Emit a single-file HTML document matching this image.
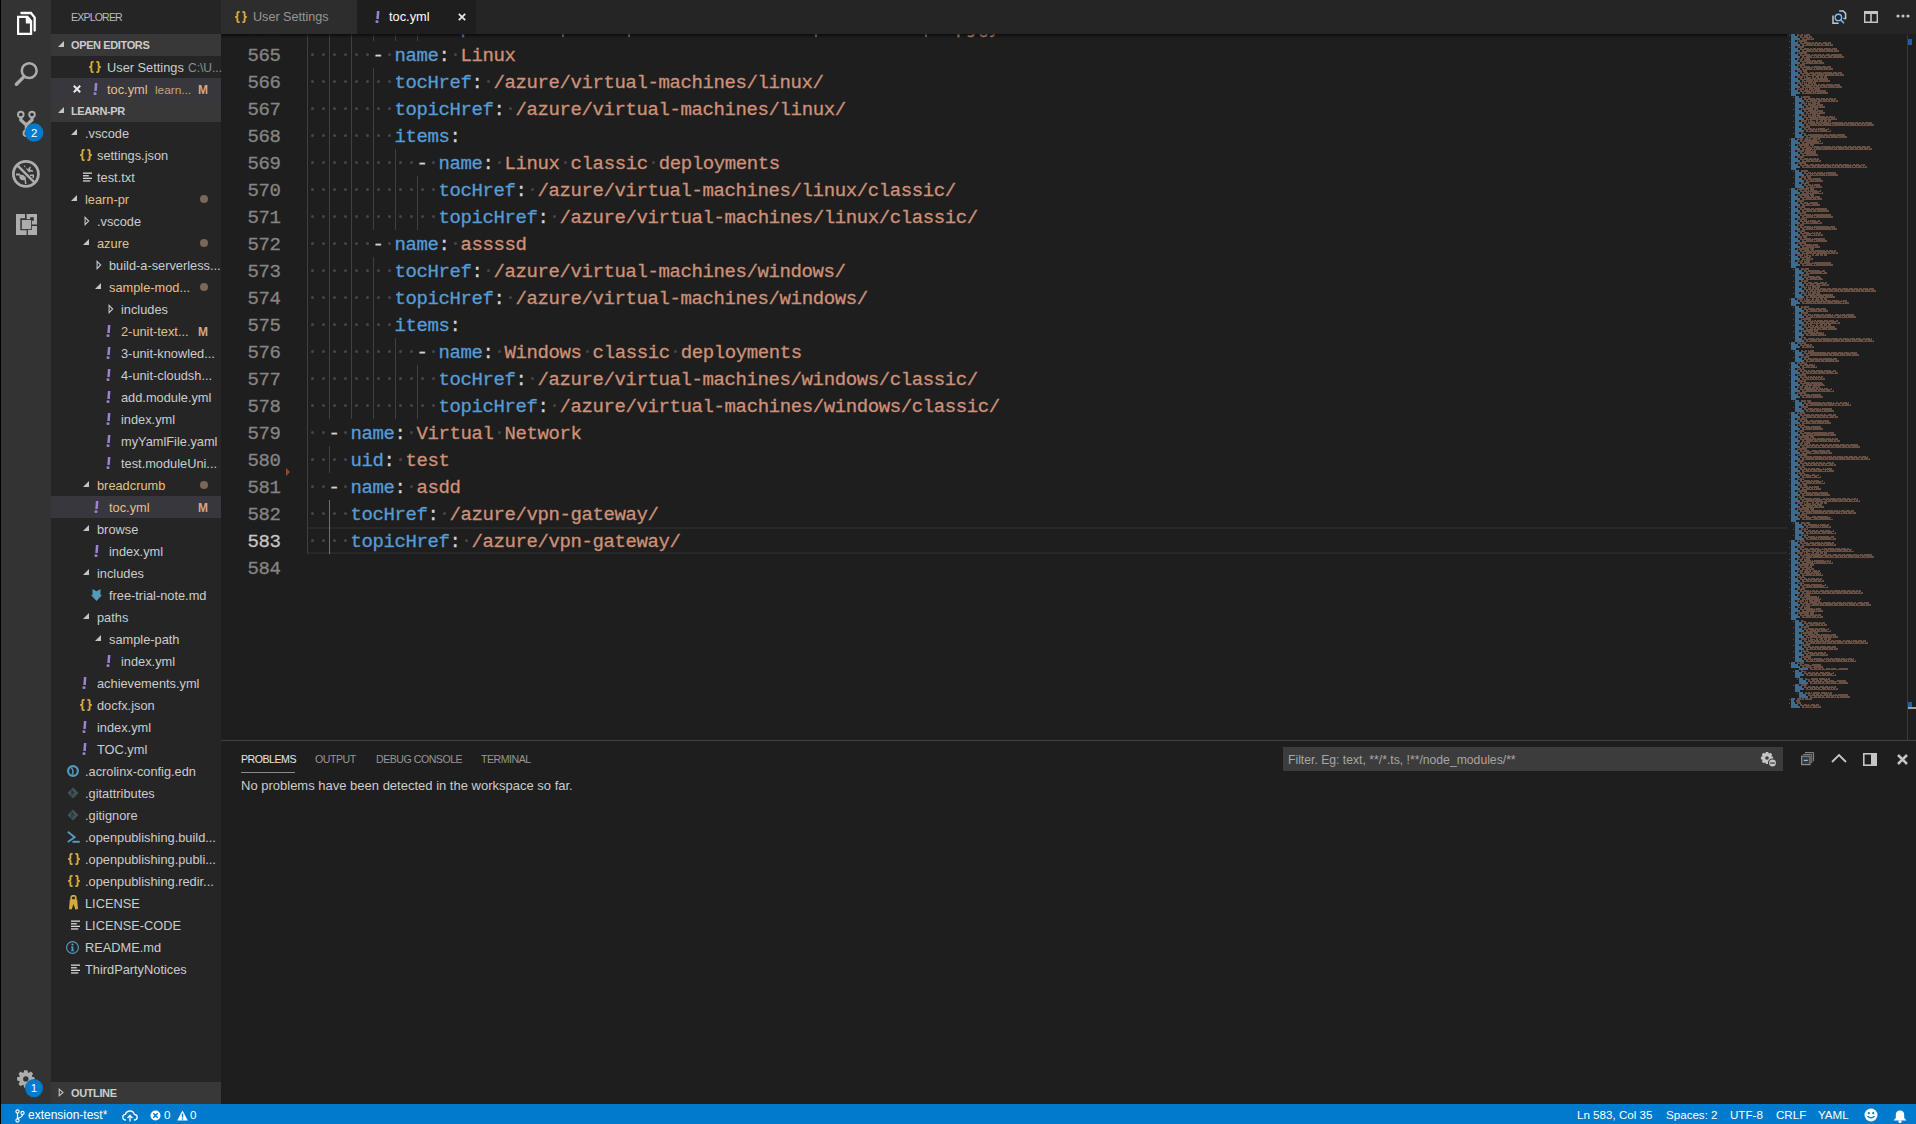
<!DOCTYPE html><html><head><meta charset="utf-8"><style>
*{box-sizing:border-box}
html,body{margin:0;padding:0}
body{width:1916px;height:1124px;overflow:hidden;position:relative;background:#1e1e1e;font-family:"Liberation Sans",sans-serif;}
.a{position:absolute}
.ic{position:absolute;display:block}
.t{position:absolute;white-space:nowrap;font-size:12.8px;line-height:22px;color:#cccccc}
.code{position:absolute;white-space:pre;font-family:"Liberation Mono",monospace;font-size:19px;letter-spacing:-0.4px;line-height:27px;-webkit-text-stroke:0.3px currentColor}
.k{color:#569cd6} .v{color:#ce9178} .p{color:#d4d4d4}
.cap{position:absolute;white-space:nowrap;font-size:11px;line-height:22px}
</style></head><body>
<div class="a" style="left:0;top:0;width:1px;height:1124px;background:#000;z-index:5"></div><div class="a" style="left:1px;top:0;width:50px;height:1104px;background:#333333"></div><div class="a" style="left:51px;top:0;width:170px;height:1104px;background:#252526"></div><div class="cap" style="left:71px;top:6px;color:#bbbbbb;font-size:10.6px;letter-spacing:-0.85px">EXPLORER</div><div class="a" style="left:51px;top:34px;width:170px;height:22px;background:#383838"></div><svg class="ic" style="left:58px;top:41px" width="6" height="6" viewBox="0 0 6 6"><path d="M6 0 L6 6 L0 6 Z" fill="#c5c5c5"/></svg><div class="cap" style="left:71px;top:34px;font-weight:bold;color:#cccccc;font-size:11px;letter-spacing:-0.38px">OPEN EDITORS</div><svg class="ic" style="left:89.0px;top:61.0px" width="12" height="12" viewBox="0 0 12 12"><path d="M4.6 0.9 L3.4 0.9 Q2.4 0.9 2.4 1.9 L2.4 5 L1 6 L2.4 7 L2.4 10.1 Q2.4 11.1 3.4 11.1 L4.6 11.1" fill="none" stroke="#dcaf3c" stroke-width="1.8"/><path d="M7.4 0.9 L8.6 0.9 Q9.6 0.9 9.6 1.9 L9.6 5 L11 6 L9.6 7 L9.6 10.1 Q9.6 11.1 8.6 11.1 L7.4 11.1" fill="none" stroke="#dcaf3c" stroke-width="1.8"/></svg><div class="t" style="left:107px;top:57px">User Settings</div><div class="t" style="left:188px;top:57px;color:#8f8f8f;font-size:12px">C:\U...</div><div class="a" style="left:51px;top:78px;width:170px;height:22px;background:#37373d"></div><svg class="ic" style="left:73px;top:85px" width="8" height="8" viewBox="0 0 8 8"><path d="M0.8 0.8 L7.2 7.2 M7.2 0.8 L0.8 7.2" stroke="#e8e8e8" stroke-width="2"/></svg><svg class="ic" style="left:92.5px;top:83.0px" width="5" height="12" viewBox="0 0 5 12"><path d="M1.9 0 L4.4 0 L3.8 7.9 L1.3 7.9 Z" fill="#9c82d0"/><rect x="0.5" y="9.2" width="3" height="2.8" rx="1.1" fill="#9a80cc"/></svg><div class="t" style="left:107px;top:79px;color:#e2c08d">toc.yml</div><div class="t" style="left:155px;top:79px;color:#e2c08d;opacity:.8;font-size:11.8px">learn...</div><div class="t" style="left:198px;top:79px;color:#cfa98a;font-weight:bold;font-size:12px">M</div><div class="a" style="left:51px;top:100px;width:170px;height:22px;background:#383838"></div><svg class="ic" style="left:58px;top:107px" width="6" height="6" viewBox="0 0 6 6"><path d="M6 0 L6 6 L0 6 Z" fill="#c5c5c5"/></svg><div class="cap" style="left:71px;top:100px;font-weight:bold;color:#cccccc;font-size:11px;letter-spacing:-0.38px">LEARN-PR</div><svg class="ic" style="left:71px;top:129px" width="6" height="6" viewBox="0 0 6 6"><path d="M6 0 L6 6 L0 6 Z" fill="#c5c5c5"/></svg><div class="t" style="left:85px;top:123px;color:#cccccc">.vscode</div><svg class="ic" style="left:79.5px;top:149.0px" width="12" height="12" viewBox="0 0 12 12"><path d="M4.6 0.9 L3.4 0.9 Q2.4 0.9 2.4 1.9 L2.4 5 L1 6 L2.4 7 L2.4 10.1 Q2.4 11.1 3.4 11.1 L4.6 11.1" fill="none" stroke="#dcaf3c" stroke-width="1.8"/><path d="M7.4 0.9 L8.6 0.9 Q9.6 0.9 9.6 1.9 L9.6 5 L11 6 L9.6 7 L9.6 10.1 Q9.6 11.1 8.6 11.1 L7.4 11.1" fill="none" stroke="#dcaf3c" stroke-width="1.8"/></svg><div class="t" style="left:97px;top:145px;color:#cccccc">settings.json</div><svg class="ic" style="left:82.5px;top:171.7px" width="9.4" height="10" viewBox="0 0 9.4 10"><rect x="0" y="0.5" width="9.4" height="1.3" fill="#d4d7d6"/><rect x="0" y="3.1" width="5.8" height="1.3" fill="#d4d7d6"/><rect x="0" y="5.7" width="9.4" height="1.3" fill="#d4d7d6"/><rect x="0" y="8.3" width="7.3" height="1.3" fill="#d4d7d6"/></svg><div class="t" style="left:97px;top:167px;color:#cccccc">test.txt</div><svg class="ic" style="left:71px;top:195px" width="6" height="6" viewBox="0 0 6 6"><path d="M6 0 L6 6 L0 6 Z" fill="#c5c5c5"/></svg><div class="t" style="left:85px;top:189px;color:#e2c08d">learn-pr</div><div class="a" style="left:200px;top:195px;width:8px;height:8px;border-radius:50%;background:#7b665a"></div><svg class="ic" style="left:84px;top:216px" width="6" height="10" viewBox="0 0 6 10"><path d="M1.1 1.3 L4.7 5 L1.1 8.7 Z" fill="none" stroke="#c5c5c5" stroke-width="1.1"/></svg><div class="t" style="left:97px;top:211px;color:#cccccc">.vscode</div><svg class="ic" style="left:83px;top:239px" width="6" height="6" viewBox="0 0 6 6"><path d="M6 0 L6 6 L0 6 Z" fill="#c5c5c5"/></svg><div class="t" style="left:97px;top:233px;color:#e2c08d">azure</div><div class="a" style="left:200px;top:239px;width:8px;height:8px;border-radius:50%;background:#7b665a"></div><svg class="ic" style="left:96px;top:260px" width="6" height="10" viewBox="0 0 6 10"><path d="M1.1 1.3 L4.7 5 L1.1 8.7 Z" fill="none" stroke="#c5c5c5" stroke-width="1.1"/></svg><div class="t" style="left:109px;top:255px;color:#cccccc">build-a-serverless...</div><svg class="ic" style="left:95px;top:283px" width="6" height="6" viewBox="0 0 6 6"><path d="M6 0 L6 6 L0 6 Z" fill="#c5c5c5"/></svg><div class="t" style="left:109px;top:277px;color:#e2c08d">sample-mod...</div><div class="a" style="left:200px;top:283px;width:8px;height:8px;border-radius:50%;background:#7b665a"></div><svg class="ic" style="left:108px;top:304px" width="6" height="10" viewBox="0 0 6 10"><path d="M1.1 1.3 L4.7 5 L1.1 8.7 Z" fill="none" stroke="#c5c5c5" stroke-width="1.1"/></svg><div class="t" style="left:121px;top:299px;color:#cccccc">includes</div><svg class="ic" style="left:106.3px;top:325.0px" width="5" height="12" viewBox="0 0 5 12"><path d="M1.9 0 L4.4 0 L3.8 7.9 L1.3 7.9 Z" fill="#9c82d0"/><rect x="0.5" y="9.2" width="3" height="2.8" rx="1.1" fill="#9a80cc"/></svg><div class="t" style="left:121px;top:321px;color:#e2c08d">2-unit-text...</div><div class="t" style="left:198px;top:321px;color:#cfa98a;font-weight:bold;font-size:12px">M</div><svg class="ic" style="left:106.3px;top:347.0px" width="5" height="12" viewBox="0 0 5 12"><path d="M1.9 0 L4.4 0 L3.8 7.9 L1.3 7.9 Z" fill="#9c82d0"/><rect x="0.5" y="9.2" width="3" height="2.8" rx="1.1" fill="#9a80cc"/></svg><div class="t" style="left:121px;top:343px;color:#cccccc">3-unit-knowled...</div><svg class="ic" style="left:106.3px;top:369.0px" width="5" height="12" viewBox="0 0 5 12"><path d="M1.9 0 L4.4 0 L3.8 7.9 L1.3 7.9 Z" fill="#9c82d0"/><rect x="0.5" y="9.2" width="3" height="2.8" rx="1.1" fill="#9a80cc"/></svg><div class="t" style="left:121px;top:365px;color:#cccccc">4-unit-cloudsh...</div><svg class="ic" style="left:106.3px;top:391.0px" width="5" height="12" viewBox="0 0 5 12"><path d="M1.9 0 L4.4 0 L3.8 7.9 L1.3 7.9 Z" fill="#9c82d0"/><rect x="0.5" y="9.2" width="3" height="2.8" rx="1.1" fill="#9a80cc"/></svg><div class="t" style="left:121px;top:387px;color:#cccccc">add.module.yml</div><svg class="ic" style="left:106.3px;top:413.0px" width="5" height="12" viewBox="0 0 5 12"><path d="M1.9 0 L4.4 0 L3.8 7.9 L1.3 7.9 Z" fill="#9c82d0"/><rect x="0.5" y="9.2" width="3" height="2.8" rx="1.1" fill="#9a80cc"/></svg><div class="t" style="left:121px;top:409px;color:#cccccc">index.yml</div><svg class="ic" style="left:106.3px;top:435.0px" width="5" height="12" viewBox="0 0 5 12"><path d="M1.9 0 L4.4 0 L3.8 7.9 L1.3 7.9 Z" fill="#9c82d0"/><rect x="0.5" y="9.2" width="3" height="2.8" rx="1.1" fill="#9a80cc"/></svg><div class="t" style="left:121px;top:431px;color:#cccccc">myYamlFile.yaml</div><svg class="ic" style="left:106.3px;top:457.0px" width="5" height="12" viewBox="0 0 5 12"><path d="M1.9 0 L4.4 0 L3.8 7.9 L1.3 7.9 Z" fill="#9c82d0"/><rect x="0.5" y="9.2" width="3" height="2.8" rx="1.1" fill="#9a80cc"/></svg><div class="t" style="left:121px;top:453px;color:#cccccc">test.moduleUni...</div><svg class="ic" style="left:83px;top:481px" width="6" height="6" viewBox="0 0 6 6"><path d="M6 0 L6 6 L0 6 Z" fill="#c5c5c5"/></svg><div class="t" style="left:97px;top:475px;color:#e2c08d">breadcrumb</div><div class="a" style="left:200px;top:481px;width:8px;height:8px;border-radius:50%;background:#7b665a"></div><div class="a" style="left:51px;top:496px;width:170px;height:22px;background:#37373d"></div><svg class="ic" style="left:94.3px;top:501.0px" width="5" height="12" viewBox="0 0 5 12"><path d="M1.9 0 L4.4 0 L3.8 7.9 L1.3 7.9 Z" fill="#9c82d0"/><rect x="0.5" y="9.2" width="3" height="2.8" rx="1.1" fill="#9a80cc"/></svg><div class="t" style="left:109px;top:497px;color:#e2c08d">toc.yml</div><div class="t" style="left:198px;top:497px;color:#cfa98a;font-weight:bold;font-size:12px">M</div><svg class="ic" style="left:83px;top:525px" width="6" height="6" viewBox="0 0 6 6"><path d="M6 0 L6 6 L0 6 Z" fill="#c5c5c5"/></svg><div class="t" style="left:97px;top:519px;color:#cccccc">browse</div><svg class="ic" style="left:94.3px;top:545.0px" width="5" height="12" viewBox="0 0 5 12"><path d="M1.9 0 L4.4 0 L3.8 7.9 L1.3 7.9 Z" fill="#9c82d0"/><rect x="0.5" y="9.2" width="3" height="2.8" rx="1.1" fill="#9a80cc"/></svg><div class="t" style="left:109px;top:541px;color:#cccccc">index.yml</div><svg class="ic" style="left:83px;top:569px" width="6" height="6" viewBox="0 0 6 6"><path d="M6 0 L6 6 L0 6 Z" fill="#c5c5c5"/></svg><div class="t" style="left:97px;top:563px;color:#cccccc">includes</div><svg class="ic" style="left:91.4px;top:589.0px" width="11" height="12" viewBox="0 0 11 12"><path d="M1.5 0 L5.5 2.2 L9.5 0 L9.5 6 L11 6 L5.5 12 L0 6 L1.5 6 Z" fill="#519aba"/></svg><div class="t" style="left:109px;top:585px;color:#cccccc">free-trial-note.md</div><svg class="ic" style="left:83px;top:613px" width="6" height="6" viewBox="0 0 6 6"><path d="M6 0 L6 6 L0 6 Z" fill="#c5c5c5"/></svg><div class="t" style="left:97px;top:607px;color:#cccccc">paths</div><svg class="ic" style="left:95px;top:635px" width="6" height="6" viewBox="0 0 6 6"><path d="M6 0 L6 6 L0 6 Z" fill="#c5c5c5"/></svg><div class="t" style="left:109px;top:629px;color:#cccccc">sample-path</div><svg class="ic" style="left:106.3px;top:655.0px" width="5" height="12" viewBox="0 0 5 12"><path d="M1.9 0 L4.4 0 L3.8 7.9 L1.3 7.9 Z" fill="#9c82d0"/><rect x="0.5" y="9.2" width="3" height="2.8" rx="1.1" fill="#9a80cc"/></svg><div class="t" style="left:121px;top:651px;color:#cccccc">index.yml</div><svg class="ic" style="left:82.3px;top:677.0px" width="5" height="12" viewBox="0 0 5 12"><path d="M1.9 0 L4.4 0 L3.8 7.9 L1.3 7.9 Z" fill="#9c82d0"/><rect x="0.5" y="9.2" width="3" height="2.8" rx="1.1" fill="#9a80cc"/></svg><div class="t" style="left:97px;top:673px;color:#cccccc">achievements.yml</div><svg class="ic" style="left:79.5px;top:699.0px" width="12" height="12" viewBox="0 0 12 12"><path d="M4.6 0.9 L3.4 0.9 Q2.4 0.9 2.4 1.9 L2.4 5 L1 6 L2.4 7 L2.4 10.1 Q2.4 11.1 3.4 11.1 L4.6 11.1" fill="none" stroke="#dcaf3c" stroke-width="1.8"/><path d="M7.4 0.9 L8.6 0.9 Q9.6 0.9 9.6 1.9 L9.6 5 L11 6 L9.6 7 L9.6 10.1 Q9.6 11.1 8.6 11.1 L7.4 11.1" fill="none" stroke="#dcaf3c" stroke-width="1.8"/></svg><div class="t" style="left:97px;top:695px;color:#cccccc">docfx.json</div><svg class="ic" style="left:82.3px;top:721.0px" width="5" height="12" viewBox="0 0 5 12"><path d="M1.9 0 L4.4 0 L3.8 7.9 L1.3 7.9 Z" fill="#9c82d0"/><rect x="0.5" y="9.2" width="3" height="2.8" rx="1.1" fill="#9a80cc"/></svg><div class="t" style="left:97px;top:717px;color:#cccccc">index.yml</div><svg class="ic" style="left:82.3px;top:743.0px" width="5" height="12" viewBox="0 0 5 12"><path d="M1.9 0 L4.4 0 L3.8 7.9 L1.3 7.9 Z" fill="#9c82d0"/><rect x="0.5" y="9.2" width="3" height="2.8" rx="1.1" fill="#9a80cc"/></svg><div class="t" style="left:97px;top:739px;color:#cccccc">TOC.yml</div><svg class="ic" style="left:66.7px;top:765.0px" width="12" height="12" viewBox="0 0 12 12"><circle cx="6" cy="6" r="4.9" fill="none" stroke="#519aba" stroke-width="2.2"/><path d="M4.2 2.8 Q7.2 5.5 5.2 9.5" fill="none" stroke="#519aba" stroke-width="1.5"/></svg><div class="t" style="left:85px;top:761px;color:#cccccc">.acrolinx-config.edn</div><svg class="ic" style="left:66.5px;top:787.0px" width="12" height="12" viewBox="0 0 12 12"><path d="M6 0.5 L11.5 6 L6 11.5 L0.5 6 Z" fill="#41535b"/><path d="M5 3.2 L5 8.8 M5 4.5 L7.5 6.5" stroke="#252526" stroke-width="1"/></svg><div class="t" style="left:85px;top:783px;color:#cccccc">.gitattributes</div><svg class="ic" style="left:66.5px;top:809.0px" width="12" height="12" viewBox="0 0 12 12"><path d="M6 0.5 L11.5 6 L6 11.5 L0.5 6 Z" fill="#41535b"/><path d="M5 3.2 L5 8.8 M5 4.5 L7.5 6.5" stroke="#252526" stroke-width="1"/></svg><div class="t" style="left:85px;top:805px;color:#cccccc">.gitignore</div><svg class="ic" style="left:66.5px;top:831.0px" width="13" height="12" viewBox="0 0 13 12"><path d="M0.8 0.8 L7.6 6.2 L0.8 11" fill="none" stroke="#519aba" stroke-width="2"/><rect x="5.5" y="9.8" width="7.2" height="2" fill="#519aba"/></svg><div class="t" style="left:85px;top:827px;color:#cccccc">.openpublishing.build...</div><svg class="ic" style="left:67.5px;top:853.0px" width="12" height="12" viewBox="0 0 12 12"><path d="M4.6 0.9 L3.4 0.9 Q2.4 0.9 2.4 1.9 L2.4 5 L1 6 L2.4 7 L2.4 10.1 Q2.4 11.1 3.4 11.1 L4.6 11.1" fill="none" stroke="#dcaf3c" stroke-width="1.8"/><path d="M7.4 0.9 L8.6 0.9 Q9.6 0.9 9.6 1.9 L9.6 5 L11 6 L9.6 7 L9.6 10.1 Q9.6 11.1 8.6 11.1 L7.4 11.1" fill="none" stroke="#dcaf3c" stroke-width="1.8"/></svg><div class="t" style="left:85px;top:849px;color:#cccccc">.openpublishing.publi...</div><svg class="ic" style="left:67.5px;top:875.0px" width="12" height="12" viewBox="0 0 12 12"><path d="M4.6 0.9 L3.4 0.9 Q2.4 0.9 2.4 1.9 L2.4 5 L1 6 L2.4 7 L2.4 10.1 Q2.4 11.1 3.4 11.1 L4.6 11.1" fill="none" stroke="#dcaf3c" stroke-width="1.8"/><path d="M7.4 0.9 L8.6 0.9 Q9.6 0.9 9.6 1.9 L9.6 5 L11 6 L9.6 7 L9.6 10.1 Q9.6 11.1 8.6 11.1 L7.4 11.1" fill="none" stroke="#dcaf3c" stroke-width="1.8"/></svg><div class="t" style="left:85px;top:871px;color:#cccccc">.openpublishing.redir...</div><svg class="ic" style="left:68.7px;top:895.3px" width="9" height="15" viewBox="0 0 9 15"><circle cx="4.5" cy="3" r="2.4" fill="none" stroke="#d4aa3c" stroke-width="1.6"/><path d="M0.8 4.6 L8.2 4.6 L9 14 L6.4 14.5 L4.5 9 L2.6 14.5 L0 14 Z" fill="#d4aa3c"/></svg><div class="t" style="left:85px;top:893px;color:#cccccc">LICENSE</div><svg class="ic" style="left:70.5px;top:919.7px" width="9.4" height="10" viewBox="0 0 9.4 10"><rect x="0" y="0.5" width="9.4" height="1.3" fill="#d4d7d6"/><rect x="0" y="3.1" width="5.8" height="1.3" fill="#d4d7d6"/><rect x="0" y="5.7" width="9.4" height="1.3" fill="#d4d7d6"/><rect x="0" y="8.3" width="7.3" height="1.3" fill="#d4d7d6"/></svg><div class="t" style="left:85px;top:915px;color:#cccccc">LICENSE-CODE</div><svg class="ic" style="left:66.2px;top:940.5px" width="13" height="13" viewBox="0 0 13 13"><circle cx="6.5" cy="6.5" r="5.9" fill="none" stroke="#519aba" stroke-width="1.2"/><circle cx="6.5" cy="3.6" r="1.1" fill="#519aba"/><path d="M5 5.6 L7.4 5.6 L7.4 9.4 L8.2 9.4 L8.2 10.2 L4.8 10.2 L4.8 9.4 L5.6 9.4 L5.6 6.4 L5 6.4 Z" fill="#519aba"/></svg><div class="t" style="left:85px;top:937px;color:#cccccc">README.md</div><svg class="ic" style="left:70.5px;top:963.7px" width="9.4" height="10" viewBox="0 0 9.4 10"><rect x="0" y="0.5" width="9.4" height="1.3" fill="#d4d7d6"/><rect x="0" y="3.1" width="5.8" height="1.3" fill="#d4d7d6"/><rect x="0" y="5.7" width="9.4" height="1.3" fill="#d4d7d6"/><rect x="0" y="8.3" width="7.3" height="1.3" fill="#d4d7d6"/></svg><div class="t" style="left:85px;top:959px;color:#cccccc">ThirdPartyNotices</div><div class="a" style="left:51px;top:1082px;width:170px;height:22px;background:#383838"></div><svg class="ic" style="left:58px;top:1086px" width="6" height="14" viewBox="0 0 6 14"><path d="M1.2 3.2 L5 6.5 L1.2 9.8 Z" fill="none" stroke="#c5c5c5" stroke-width="1.1"/></svg><div class="cap" style="left:71px;top:1082px;font-weight:bold;color:#cccccc;font-size:11px;letter-spacing:-0.38px">OUTLINE</div><svg class="ic" style="left:0;top:0" width="51" height="250" viewBox="0 0 51 250"><path fill-rule="evenodd" fill="#ffffff" d="M17 15.7 L28 15.7 L32.2 20.7 L32.2 35 L17 35 Z M19.2 18.1 L25.8 18.1 L25.8 23.4 L29.9 23.4 L29.9 32.8 L19.2 32.8 Z"/><path d="M21.4 13 L31 13 L34.7 17.6 L34.7 30.5" fill="none" stroke="#ffffff" stroke-width="2.3" stroke-linecap="round" stroke-linejoin="miter"/><circle cx="29.2" cy="70.7" r="7.4" fill="none" stroke="#adadad" stroke-width="2.5"/><path d="M23.8 76.9 L16.4 84.2" stroke="#adadad" stroke-width="3.4" stroke-linecap="round"/><circle cx="20.8" cy="114.5" r="2.8" fill="none" stroke="#adadad" stroke-width="1.9"/><circle cx="32" cy="114.5" r="2.8" fill="none" stroke="#adadad" stroke-width="1.9"/><circle cx="26.3" cy="133.3" r="2.8" fill="none" stroke="#adadad" stroke-width="1.9"/><path d="M20.8 117 L20.8 120 L26.3 125 L32 120 L32 117 M26.3 124.5 L26.3 130.5" fill="none" stroke="#adadad" stroke-width="3.2" stroke-linejoin="round"/><circle cx="25.9" cy="173.9" r="12.5" fill="none" stroke="#adadad" stroke-width="2.8"/><path d="M17.6 165.6 L34.2 182.2" stroke="#adadad" stroke-width="2.5"/><path d="M23.5 165.5 L25 165.5 L25.5 168 L28 169 L30 166.5 L31 167 L30 169.5 L33 170.5 L33 172 L30.5 171.5 L29 172.5 Z" fill="#adadad"/><path d="M16 173.6 L19.5 173.6 L21 175 Q23.5 174 24.5 176.5 L25.5 176.5 L26 180 L26.5 184 L25 184 L24.5 180 Q22 181 20 179 Q19 177 19.5 175.5 L16 175.5 Z" fill="#adadad"/><path d="M30 174.5 L34 174.5 L34 178 L32.5 178 L32.5 176 L30 176 Z" fill="#adadad"/><path d="M16 214 L25 214 L25 218.3 L20.3 218.3 L20.3 230.3 L26.6 230.3 L26.6 235 L16 235 Z" fill="#adadad"/><path fill-rule="evenodd" d="M26.6 214 L37 214 L37 224.6 L26.6 224.6 Z M30.2 217.2 L33.8 217.2 L33.8 220.7 L30.2 220.7 Z" fill="#adadad"/><rect x="27.9" y="226" width="9.1" height="9" fill="#adadad"/><rect x="21" y="219.2" width="10.9" height="10.7" fill="#333333"/><rect x="21.8" y="220" width="9.3" height="9.1" fill="#adadad"/><circle cx="34.2" cy="132.4" r="9.2" fill="#007acc"/></svg><div class="a" style="left:25px;top:124px;width:18.4px;height:18.4px;color:#fff;font-size:11.5px;line-height:18.4px;text-align:center">2</div><svg class="ic" style="left:0;top:0" width="1916" height="1124" viewBox="0 0 1916 1124"><polygon points="32.04,1076.74 34.56,1077.31 34.56,1080.49 32.04,1081.06 31.74,1081.78 33.12,1083.97 30.87,1086.22 28.68,1084.84 27.96,1085.14 27.39,1087.66 24.21,1087.66 23.64,1085.14 22.92,1084.84 20.73,1086.22 18.48,1083.97 19.86,1081.78 19.56,1081.06 17.04,1080.49 17.04,1077.31 19.56,1076.74 19.86,1076.02 18.48,1073.83 20.73,1071.58 22.92,1072.96 23.64,1072.66 24.21,1070.14 27.39,1070.14 27.96,1072.66 28.68,1072.96 30.87,1071.58 33.12,1073.83 31.74,1076.02" fill="#adadad"/><circle cx="25.8" cy="1078.9" r="6.6" fill="#adadad"/><circle cx="25.8" cy="1078.9" r="2.7" fill="#333333"/></svg><svg class="ic" style="left:0;top:1070px" width="51" height="30"><circle cx="34" cy="18.1" r="9.1" fill="#007acc"/></svg><div class="a" style="left:25px;top:1079px;width:18px;height:18px;color:#fff;font-size:11.5px;line-height:18px;text-align:center">1</div><div class="a" style="left:221px;top:0;width:1695px;height:34px;background:#252526"></div><div class="a" style="left:221px;top:0;width:136px;height:34px;background:#2d2d2d"></div><div class="a" style="left:357px;top:0;width:119px;height:34px;background:#1e1e1e"></div><svg class="ic" style="left:235.0px;top:11.0px" width="12" height="12" viewBox="0 0 12 12"><path d="M4.6 0.9 L3.4 0.9 Q2.4 0.9 2.4 1.9 L2.4 5 L1 6 L2.4 7 L2.4 10.1 Q2.4 11.1 3.4 11.1 L4.6 11.1" fill="none" stroke="#dcaf3c" stroke-width="1.8"/><path d="M7.4 0.9 L8.6 0.9 Q9.6 0.9 9.6 1.9 L9.6 5 L11 6 L9.6 7 L9.6 10.1 Q9.6 11.1 8.6 11.1 L7.4 11.1" fill="none" stroke="#dcaf3c" stroke-width="1.8"/></svg><div class="t" style="left:253px;top:6px;color:#969696;font-size:12.6px">User Settings</div><svg class="ic" style="left:374.5px;top:11.0px" width="5" height="12" viewBox="0 0 5 12"><path d="M1.9 0 L4.4 0 L3.8 7.9 L1.3 7.9 Z" fill="#9c82d0"/><rect x="0.5" y="9.2" width="3" height="2.8" rx="1.1" fill="#9a80cc"/></svg><div class="t" style="left:389px;top:6px;color:#ffffff;font-size:12.8px">toc.yml</div><svg class="ic" style="left:458px;top:13px" width="8" height="8" viewBox="0 0 8 8"><path d="M0.8 0.8 L7.2 7.2 M7.2 0.8 L0.8 7.2" stroke="#e8e8e8" stroke-width="1.7"/></svg><svg class="ic" style="left:1826px;top:4px" width="26" height="26" viewBox="1826 4 26 26"><path d="M1839.2 11 L1843.2 11 L1845.6 13.4 L1845.6 18.6 L1843.4 18.6" fill="none" stroke="#c5c5c5" stroke-width="1.5"/><path d="M1833 15.6 L1833 23.2 L1838.6 23.2" fill="none" stroke="#c5c5c5" stroke-width="1.5"/><circle cx="1838.4" cy="17.4" r="3.2" fill="none" stroke="#75beff" stroke-width="1.4"/><path d="M1840.6 19.8 L1844 23.2" stroke="#75beff" stroke-width="1.5"/></svg><svg class="ic" style="left:1860px;top:6px" width="24" height="22" viewBox="1860 6 24 22"><path fill-rule="evenodd" fill="#c5c5c5" d="M1864 11 L1878 11 L1878 23 L1864 23 Z M1865.4 14 L1870.2 14 L1870.2 21.6 L1865.4 21.6 Z M1871.8 14 L1876.6 14 L1876.6 21.6 L1871.8 21.6 Z"/></svg><svg class="ic" style="left:1896.0px;top:14.0px" width="14" height="4" viewBox="0 0 14 4"><circle cx="2" cy="2" r="1.6" fill="#c5c5c5"/><circle cx="7" cy="2" r="1.6" fill="#c5c5c5"/><circle cx="12" cy="2" r="1.6" fill="#c5c5c5"/></svg><div class="a" style="left:221px;top:34px;width:1566px;height:706px;overflow:hidden"><div class="a" style="left:86px;top:493px;width:1480px;height:27px;border-top:2px solid #282828;border-bottom:2px solid #282828"></div><svg class="ic" style="left:65px;top:434px" width="4" height="8" viewBox="0 0 4 8"><path d="M0 0 L4 4 L0 8 Z" fill="#a4412c"/></svg><div class="code" style="left:25.5px;top:-18.5px;width:34px;text-align:right;color:#858585">564</div><div class="a" style="left:86px;top:-20px;width:1px;height:27px;background:#404040"></div><div class="a" style="left:108px;top:-20px;width:1px;height:27px;background:#404040"></div><div class="a" style="left:130px;top:-20px;width:1px;height:27px;background:#404040"></div><div class="a" style="left:152px;top:-20px;width:1px;height:27px;background:#404040"></div><div class="a" style="left:174px;top:-20px;width:1px;height:27px;background:#404040"></div><div class="a" style="left:196px;top:-20px;width:1px;height:27px;background:#404040"></div><div class="a" style="left:89.60000000000002px;top:-8px;width:3px;height:3px;border-radius:1.5px;background:#474747"></div><div class="a" style="left:100.60000000000002px;top:-8px;width:3px;height:3px;border-radius:1.5px;background:#474747"></div><div class="a" style="left:111.60000000000002px;top:-8px;width:3px;height:3px;border-radius:1.5px;background:#474747"></div><div class="a" style="left:122.60000000000002px;top:-8px;width:3px;height:3px;border-radius:1.5px;background:#474747"></div><div class="a" style="left:133.60000000000002px;top:-8px;width:3px;height:3px;border-radius:1.5px;background:#474747"></div><div class="a" style="left:144.60000000000002px;top:-8px;width:3px;height:3px;border-radius:1.5px;background:#474747"></div><div class="a" style="left:155.60000000000002px;top:-8px;width:3px;height:3px;border-radius:1.5px;background:#474747"></div><div class="a" style="left:166.60000000000002px;top:-8px;width:3px;height:3px;border-radius:1.5px;background:#474747"></div><div class="a" style="left:177.60000000000002px;top:-8px;width:3px;height:3px;border-radius:1.5px;background:#474747"></div><div class="a" style="left:188.60000000000002px;top:-8px;width:3px;height:3px;border-radius:1.5px;background:#474747"></div><div class="a" style="left:199.60000000000002px;top:-8px;width:3px;height:3px;border-radius:1.5px;background:#474747"></div><div class="a" style="left:210.60000000000002px;top:-8px;width:3px;height:3px;border-radius:1.5px;background:#474747"></div><div class="a" style="left:331.6px;top:-8px;width:3px;height:3px;border-radius:1.5px;background:#474747"></div><div class="code" style="left:85.5px;top:-19.5px">            <span class="k">topicHref</span><span class="p">:</span> <span class="v">/azure/virtual-machines/xxxxxxxxx/-xpjgy</span></div><div class="code" style="left:25.5px;top:8.5px;width:34px;text-align:right;color:#858585">565</div><div class="a" style="left:86px;top:7px;width:1px;height:27px;background:#404040"></div><div class="a" style="left:108px;top:7px;width:1px;height:27px;background:#404040"></div><div class="a" style="left:130px;top:7px;width:1px;height:27px;background:#404040"></div><div class="a" style="left:89.60000000000002px;top:19px;width:3px;height:3px;border-radius:1.5px;background:#474747"></div><div class="a" style="left:100.60000000000002px;top:19px;width:3px;height:3px;border-radius:1.5px;background:#474747"></div><div class="a" style="left:111.60000000000002px;top:19px;width:3px;height:3px;border-radius:1.5px;background:#474747"></div><div class="a" style="left:122.60000000000002px;top:19px;width:3px;height:3px;border-radius:1.5px;background:#474747"></div><div class="a" style="left:133.60000000000002px;top:19px;width:3px;height:3px;border-radius:1.5px;background:#474747"></div><div class="a" style="left:144.60000000000002px;top:19px;width:3px;height:3px;border-radius:1.5px;background:#474747"></div><div class="a" style="left:166.60000000000002px;top:19px;width:3px;height:3px;border-radius:1.5px;background:#474747"></div><div class="a" style="left:232.60000000000002px;top:19px;width:3px;height:3px;border-radius:1.5px;background:#474747"></div><div class="code" style="left:85.5px;top:8.5px">      <span class="p">-</span> <span class="k">name</span><span class="p">:</span> <span class="v">Linux</span></div><div class="code" style="left:25.5px;top:35.5px;width:34px;text-align:right;color:#858585">566</div><div class="a" style="left:86px;top:34px;width:1px;height:27px;background:#404040"></div><div class="a" style="left:108px;top:34px;width:1px;height:27px;background:#404040"></div><div class="a" style="left:130px;top:34px;width:1px;height:27px;background:#404040"></div><div class="a" style="left:152px;top:34px;width:1px;height:27px;background:#404040"></div><div class="a" style="left:89.60000000000002px;top:46px;width:3px;height:3px;border-radius:1.5px;background:#474747"></div><div class="a" style="left:100.60000000000002px;top:46px;width:3px;height:3px;border-radius:1.5px;background:#474747"></div><div class="a" style="left:111.60000000000002px;top:46px;width:3px;height:3px;border-radius:1.5px;background:#474747"></div><div class="a" style="left:122.60000000000002px;top:46px;width:3px;height:3px;border-radius:1.5px;background:#474747"></div><div class="a" style="left:133.60000000000002px;top:46px;width:3px;height:3px;border-radius:1.5px;background:#474747"></div><div class="a" style="left:144.60000000000002px;top:46px;width:3px;height:3px;border-radius:1.5px;background:#474747"></div><div class="a" style="left:155.60000000000002px;top:46px;width:3px;height:3px;border-radius:1.5px;background:#474747"></div><div class="a" style="left:166.60000000000002px;top:46px;width:3px;height:3px;border-radius:1.5px;background:#474747"></div><div class="a" style="left:265.6px;top:46px;width:3px;height:3px;border-radius:1.5px;background:#474747"></div><div class="code" style="left:85.5px;top:35.5px">        <span class="k">tocHref</span><span class="p">:</span> <span class="v">/azure/virtual-machines/linux/</span></div><div class="code" style="left:25.5px;top:62.5px;width:34px;text-align:right;color:#858585">567</div><div class="a" style="left:86px;top:61px;width:1px;height:27px;background:#404040"></div><div class="a" style="left:108px;top:61px;width:1px;height:27px;background:#404040"></div><div class="a" style="left:130px;top:61px;width:1px;height:27px;background:#404040"></div><div class="a" style="left:152px;top:61px;width:1px;height:27px;background:#404040"></div><div class="a" style="left:89.60000000000002px;top:73px;width:3px;height:3px;border-radius:1.5px;background:#474747"></div><div class="a" style="left:100.60000000000002px;top:73px;width:3px;height:3px;border-radius:1.5px;background:#474747"></div><div class="a" style="left:111.60000000000002px;top:73px;width:3px;height:3px;border-radius:1.5px;background:#474747"></div><div class="a" style="left:122.60000000000002px;top:73px;width:3px;height:3px;border-radius:1.5px;background:#474747"></div><div class="a" style="left:133.60000000000002px;top:73px;width:3px;height:3px;border-radius:1.5px;background:#474747"></div><div class="a" style="left:144.60000000000002px;top:73px;width:3px;height:3px;border-radius:1.5px;background:#474747"></div><div class="a" style="left:155.60000000000002px;top:73px;width:3px;height:3px;border-radius:1.5px;background:#474747"></div><div class="a" style="left:166.60000000000002px;top:73px;width:3px;height:3px;border-radius:1.5px;background:#474747"></div><div class="a" style="left:287.6px;top:73px;width:3px;height:3px;border-radius:1.5px;background:#474747"></div><div class="code" style="left:85.5px;top:62.5px">        <span class="k">topicHref</span><span class="p">:</span> <span class="v">/azure/virtual-machines/linux/</span></div><div class="code" style="left:25.5px;top:89.5px;width:34px;text-align:right;color:#858585">568</div><div class="a" style="left:86px;top:88px;width:1px;height:27px;background:#404040"></div><div class="a" style="left:108px;top:88px;width:1px;height:27px;background:#404040"></div><div class="a" style="left:130px;top:88px;width:1px;height:27px;background:#404040"></div><div class="a" style="left:152px;top:88px;width:1px;height:27px;background:#404040"></div><div class="a" style="left:89.60000000000002px;top:100px;width:3px;height:3px;border-radius:1.5px;background:#474747"></div><div class="a" style="left:100.60000000000002px;top:100px;width:3px;height:3px;border-radius:1.5px;background:#474747"></div><div class="a" style="left:111.60000000000002px;top:100px;width:3px;height:3px;border-radius:1.5px;background:#474747"></div><div class="a" style="left:122.60000000000002px;top:100px;width:3px;height:3px;border-radius:1.5px;background:#474747"></div><div class="a" style="left:133.60000000000002px;top:100px;width:3px;height:3px;border-radius:1.5px;background:#474747"></div><div class="a" style="left:144.60000000000002px;top:100px;width:3px;height:3px;border-radius:1.5px;background:#474747"></div><div class="a" style="left:155.60000000000002px;top:100px;width:3px;height:3px;border-radius:1.5px;background:#474747"></div><div class="a" style="left:166.60000000000002px;top:100px;width:3px;height:3px;border-radius:1.5px;background:#474747"></div><div class="code" style="left:85.5px;top:89.5px">        <span class="k">items</span><span class="p">:</span></div><div class="code" style="left:25.5px;top:116.5px;width:34px;text-align:right;color:#858585">569</div><div class="a" style="left:86px;top:115px;width:1px;height:27px;background:#404040"></div><div class="a" style="left:108px;top:115px;width:1px;height:27px;background:#404040"></div><div class="a" style="left:130px;top:115px;width:1px;height:27px;background:#404040"></div><div class="a" style="left:152px;top:115px;width:1px;height:27px;background:#404040"></div><div class="a" style="left:174px;top:115px;width:1px;height:27px;background:#404040"></div><div class="a" style="left:89.60000000000002px;top:127px;width:3px;height:3px;border-radius:1.5px;background:#474747"></div><div class="a" style="left:100.60000000000002px;top:127px;width:3px;height:3px;border-radius:1.5px;background:#474747"></div><div class="a" style="left:111.60000000000002px;top:127px;width:3px;height:3px;border-radius:1.5px;background:#474747"></div><div class="a" style="left:122.60000000000002px;top:127px;width:3px;height:3px;border-radius:1.5px;background:#474747"></div><div class="a" style="left:133.60000000000002px;top:127px;width:3px;height:3px;border-radius:1.5px;background:#474747"></div><div class="a" style="left:144.60000000000002px;top:127px;width:3px;height:3px;border-radius:1.5px;background:#474747"></div><div class="a" style="left:155.60000000000002px;top:127px;width:3px;height:3px;border-radius:1.5px;background:#474747"></div><div class="a" style="left:166.60000000000002px;top:127px;width:3px;height:3px;border-radius:1.5px;background:#474747"></div><div class="a" style="left:177.60000000000002px;top:127px;width:3px;height:3px;border-radius:1.5px;background:#474747"></div><div class="a" style="left:188.60000000000002px;top:127px;width:3px;height:3px;border-radius:1.5px;background:#474747"></div><div class="a" style="left:210.60000000000002px;top:127px;width:3px;height:3px;border-radius:1.5px;background:#474747"></div><div class="a" style="left:276.6px;top:127px;width:3px;height:3px;border-radius:1.5px;background:#474747"></div><div class="a" style="left:342.6px;top:127px;width:3px;height:3px;border-radius:1.5px;background:#474747"></div><div class="a" style="left:430.6px;top:127px;width:3px;height:3px;border-radius:1.5px;background:#474747"></div><div class="code" style="left:85.5px;top:116.5px">          <span class="p">-</span> <span class="k">name</span><span class="p">:</span> <span class="v">Linux classic deployments</span></div><div class="code" style="left:25.5px;top:143.5px;width:34px;text-align:right;color:#858585">570</div><div class="a" style="left:86px;top:142px;width:1px;height:27px;background:#404040"></div><div class="a" style="left:108px;top:142px;width:1px;height:27px;background:#404040"></div><div class="a" style="left:130px;top:142px;width:1px;height:27px;background:#404040"></div><div class="a" style="left:152px;top:142px;width:1px;height:27px;background:#404040"></div><div class="a" style="left:174px;top:142px;width:1px;height:27px;background:#404040"></div><div class="a" style="left:196px;top:142px;width:1px;height:27px;background:#404040"></div><div class="a" style="left:89.60000000000002px;top:154px;width:3px;height:3px;border-radius:1.5px;background:#474747"></div><div class="a" style="left:100.60000000000002px;top:154px;width:3px;height:3px;border-radius:1.5px;background:#474747"></div><div class="a" style="left:111.60000000000002px;top:154px;width:3px;height:3px;border-radius:1.5px;background:#474747"></div><div class="a" style="left:122.60000000000002px;top:154px;width:3px;height:3px;border-radius:1.5px;background:#474747"></div><div class="a" style="left:133.60000000000002px;top:154px;width:3px;height:3px;border-radius:1.5px;background:#474747"></div><div class="a" style="left:144.60000000000002px;top:154px;width:3px;height:3px;border-radius:1.5px;background:#474747"></div><div class="a" style="left:155.60000000000002px;top:154px;width:3px;height:3px;border-radius:1.5px;background:#474747"></div><div class="a" style="left:166.60000000000002px;top:154px;width:3px;height:3px;border-radius:1.5px;background:#474747"></div><div class="a" style="left:177.60000000000002px;top:154px;width:3px;height:3px;border-radius:1.5px;background:#474747"></div><div class="a" style="left:188.60000000000002px;top:154px;width:3px;height:3px;border-radius:1.5px;background:#474747"></div><div class="a" style="left:199.60000000000002px;top:154px;width:3px;height:3px;border-radius:1.5px;background:#474747"></div><div class="a" style="left:210.60000000000002px;top:154px;width:3px;height:3px;border-radius:1.5px;background:#474747"></div><div class="a" style="left:309.6px;top:154px;width:3px;height:3px;border-radius:1.5px;background:#474747"></div><div class="code" style="left:85.5px;top:143.5px">            <span class="k">tocHref</span><span class="p">:</span> <span class="v">/azure/virtual-machines/linux/classic/</span></div><div class="code" style="left:25.5px;top:170.5px;width:34px;text-align:right;color:#858585">571</div><div class="a" style="left:86px;top:169px;width:1px;height:27px;background:#404040"></div><div class="a" style="left:108px;top:169px;width:1px;height:27px;background:#404040"></div><div class="a" style="left:130px;top:169px;width:1px;height:27px;background:#404040"></div><div class="a" style="left:152px;top:169px;width:1px;height:27px;background:#404040"></div><div class="a" style="left:174px;top:169px;width:1px;height:27px;background:#404040"></div><div class="a" style="left:196px;top:169px;width:1px;height:27px;background:#404040"></div><div class="a" style="left:89.60000000000002px;top:181px;width:3px;height:3px;border-radius:1.5px;background:#474747"></div><div class="a" style="left:100.60000000000002px;top:181px;width:3px;height:3px;border-radius:1.5px;background:#474747"></div><div class="a" style="left:111.60000000000002px;top:181px;width:3px;height:3px;border-radius:1.5px;background:#474747"></div><div class="a" style="left:122.60000000000002px;top:181px;width:3px;height:3px;border-radius:1.5px;background:#474747"></div><div class="a" style="left:133.60000000000002px;top:181px;width:3px;height:3px;border-radius:1.5px;background:#474747"></div><div class="a" style="left:144.60000000000002px;top:181px;width:3px;height:3px;border-radius:1.5px;background:#474747"></div><div class="a" style="left:155.60000000000002px;top:181px;width:3px;height:3px;border-radius:1.5px;background:#474747"></div><div class="a" style="left:166.60000000000002px;top:181px;width:3px;height:3px;border-radius:1.5px;background:#474747"></div><div class="a" style="left:177.60000000000002px;top:181px;width:3px;height:3px;border-radius:1.5px;background:#474747"></div><div class="a" style="left:188.60000000000002px;top:181px;width:3px;height:3px;border-radius:1.5px;background:#474747"></div><div class="a" style="left:199.60000000000002px;top:181px;width:3px;height:3px;border-radius:1.5px;background:#474747"></div><div class="a" style="left:210.60000000000002px;top:181px;width:3px;height:3px;border-radius:1.5px;background:#474747"></div><div class="a" style="left:331.6px;top:181px;width:3px;height:3px;border-radius:1.5px;background:#474747"></div><div class="code" style="left:85.5px;top:170.5px">            <span class="k">topicHref</span><span class="p">:</span> <span class="v">/azure/virtual-machines/linux/classic/</span></div><div class="code" style="left:25.5px;top:197.5px;width:34px;text-align:right;color:#858585">572</div><div class="a" style="left:86px;top:196px;width:1px;height:27px;background:#404040"></div><div class="a" style="left:108px;top:196px;width:1px;height:27px;background:#404040"></div><div class="a" style="left:130px;top:196px;width:1px;height:27px;background:#404040"></div><div class="a" style="left:89.60000000000002px;top:208px;width:3px;height:3px;border-radius:1.5px;background:#474747"></div><div class="a" style="left:100.60000000000002px;top:208px;width:3px;height:3px;border-radius:1.5px;background:#474747"></div><div class="a" style="left:111.60000000000002px;top:208px;width:3px;height:3px;border-radius:1.5px;background:#474747"></div><div class="a" style="left:122.60000000000002px;top:208px;width:3px;height:3px;border-radius:1.5px;background:#474747"></div><div class="a" style="left:133.60000000000002px;top:208px;width:3px;height:3px;border-radius:1.5px;background:#474747"></div><div class="a" style="left:144.60000000000002px;top:208px;width:3px;height:3px;border-radius:1.5px;background:#474747"></div><div class="a" style="left:166.60000000000002px;top:208px;width:3px;height:3px;border-radius:1.5px;background:#474747"></div><div class="a" style="left:232.60000000000002px;top:208px;width:3px;height:3px;border-radius:1.5px;background:#474747"></div><div class="code" style="left:85.5px;top:197.5px">      <span class="p">-</span> <span class="k">name</span><span class="p">:</span> <span class="v">assssd</span></div><div class="code" style="left:25.5px;top:224.5px;width:34px;text-align:right;color:#858585">573</div><div class="a" style="left:86px;top:223px;width:1px;height:27px;background:#404040"></div><div class="a" style="left:108px;top:223px;width:1px;height:27px;background:#404040"></div><div class="a" style="left:130px;top:223px;width:1px;height:27px;background:#404040"></div><div class="a" style="left:152px;top:223px;width:1px;height:27px;background:#404040"></div><div class="a" style="left:89.60000000000002px;top:235px;width:3px;height:3px;border-radius:1.5px;background:#474747"></div><div class="a" style="left:100.60000000000002px;top:235px;width:3px;height:3px;border-radius:1.5px;background:#474747"></div><div class="a" style="left:111.60000000000002px;top:235px;width:3px;height:3px;border-radius:1.5px;background:#474747"></div><div class="a" style="left:122.60000000000002px;top:235px;width:3px;height:3px;border-radius:1.5px;background:#474747"></div><div class="a" style="left:133.60000000000002px;top:235px;width:3px;height:3px;border-radius:1.5px;background:#474747"></div><div class="a" style="left:144.60000000000002px;top:235px;width:3px;height:3px;border-radius:1.5px;background:#474747"></div><div class="a" style="left:155.60000000000002px;top:235px;width:3px;height:3px;border-radius:1.5px;background:#474747"></div><div class="a" style="left:166.60000000000002px;top:235px;width:3px;height:3px;border-radius:1.5px;background:#474747"></div><div class="a" style="left:265.6px;top:235px;width:3px;height:3px;border-radius:1.5px;background:#474747"></div><div class="code" style="left:85.5px;top:224.5px">        <span class="k">tocHref</span><span class="p">:</span> <span class="v">/azure/virtual-machines/windows/</span></div><div class="code" style="left:25.5px;top:251.5px;width:34px;text-align:right;color:#858585">574</div><div class="a" style="left:86px;top:250px;width:1px;height:27px;background:#404040"></div><div class="a" style="left:108px;top:250px;width:1px;height:27px;background:#404040"></div><div class="a" style="left:130px;top:250px;width:1px;height:27px;background:#404040"></div><div class="a" style="left:152px;top:250px;width:1px;height:27px;background:#404040"></div><div class="a" style="left:89.60000000000002px;top:262px;width:3px;height:3px;border-radius:1.5px;background:#474747"></div><div class="a" style="left:100.60000000000002px;top:262px;width:3px;height:3px;border-radius:1.5px;background:#474747"></div><div class="a" style="left:111.60000000000002px;top:262px;width:3px;height:3px;border-radius:1.5px;background:#474747"></div><div class="a" style="left:122.60000000000002px;top:262px;width:3px;height:3px;border-radius:1.5px;background:#474747"></div><div class="a" style="left:133.60000000000002px;top:262px;width:3px;height:3px;border-radius:1.5px;background:#474747"></div><div class="a" style="left:144.60000000000002px;top:262px;width:3px;height:3px;border-radius:1.5px;background:#474747"></div><div class="a" style="left:155.60000000000002px;top:262px;width:3px;height:3px;border-radius:1.5px;background:#474747"></div><div class="a" style="left:166.60000000000002px;top:262px;width:3px;height:3px;border-radius:1.5px;background:#474747"></div><div class="a" style="left:287.6px;top:262px;width:3px;height:3px;border-radius:1.5px;background:#474747"></div><div class="code" style="left:85.5px;top:251.5px">        <span class="k">topicHref</span><span class="p">:</span> <span class="v">/azure/virtual-machines/windows/</span></div><div class="code" style="left:25.5px;top:278.5px;width:34px;text-align:right;color:#858585">575</div><div class="a" style="left:86px;top:277px;width:1px;height:27px;background:#404040"></div><div class="a" style="left:108px;top:277px;width:1px;height:27px;background:#404040"></div><div class="a" style="left:130px;top:277px;width:1px;height:27px;background:#404040"></div><div class="a" style="left:152px;top:277px;width:1px;height:27px;background:#404040"></div><div class="a" style="left:89.60000000000002px;top:289px;width:3px;height:3px;border-radius:1.5px;background:#474747"></div><div class="a" style="left:100.60000000000002px;top:289px;width:3px;height:3px;border-radius:1.5px;background:#474747"></div><div class="a" style="left:111.60000000000002px;top:289px;width:3px;height:3px;border-radius:1.5px;background:#474747"></div><div class="a" style="left:122.60000000000002px;top:289px;width:3px;height:3px;border-radius:1.5px;background:#474747"></div><div class="a" style="left:133.60000000000002px;top:289px;width:3px;height:3px;border-radius:1.5px;background:#474747"></div><div class="a" style="left:144.60000000000002px;top:289px;width:3px;height:3px;border-radius:1.5px;background:#474747"></div><div class="a" style="left:155.60000000000002px;top:289px;width:3px;height:3px;border-radius:1.5px;background:#474747"></div><div class="a" style="left:166.60000000000002px;top:289px;width:3px;height:3px;border-radius:1.5px;background:#474747"></div><div class="code" style="left:85.5px;top:278.5px">        <span class="k">items</span><span class="p">:</span></div><div class="code" style="left:25.5px;top:305.5px;width:34px;text-align:right;color:#858585">576</div><div class="a" style="left:86px;top:304px;width:1px;height:27px;background:#404040"></div><div class="a" style="left:108px;top:304px;width:1px;height:27px;background:#404040"></div><div class="a" style="left:130px;top:304px;width:1px;height:27px;background:#404040"></div><div class="a" style="left:152px;top:304px;width:1px;height:27px;background:#404040"></div><div class="a" style="left:174px;top:304px;width:1px;height:27px;background:#404040"></div><div class="a" style="left:89.60000000000002px;top:316px;width:3px;height:3px;border-radius:1.5px;background:#474747"></div><div class="a" style="left:100.60000000000002px;top:316px;width:3px;height:3px;border-radius:1.5px;background:#474747"></div><div class="a" style="left:111.60000000000002px;top:316px;width:3px;height:3px;border-radius:1.5px;background:#474747"></div><div class="a" style="left:122.60000000000002px;top:316px;width:3px;height:3px;border-radius:1.5px;background:#474747"></div><div class="a" style="left:133.60000000000002px;top:316px;width:3px;height:3px;border-radius:1.5px;background:#474747"></div><div class="a" style="left:144.60000000000002px;top:316px;width:3px;height:3px;border-radius:1.5px;background:#474747"></div><div class="a" style="left:155.60000000000002px;top:316px;width:3px;height:3px;border-radius:1.5px;background:#474747"></div><div class="a" style="left:166.60000000000002px;top:316px;width:3px;height:3px;border-radius:1.5px;background:#474747"></div><div class="a" style="left:177.60000000000002px;top:316px;width:3px;height:3px;border-radius:1.5px;background:#474747"></div><div class="a" style="left:188.60000000000002px;top:316px;width:3px;height:3px;border-radius:1.5px;background:#474747"></div><div class="a" style="left:210.60000000000002px;top:316px;width:3px;height:3px;border-radius:1.5px;background:#474747"></div><div class="a" style="left:276.6px;top:316px;width:3px;height:3px;border-radius:1.5px;background:#474747"></div><div class="a" style="left:364.6px;top:316px;width:3px;height:3px;border-radius:1.5px;background:#474747"></div><div class="a" style="left:452.6px;top:316px;width:3px;height:3px;border-radius:1.5px;background:#474747"></div><div class="code" style="left:85.5px;top:305.5px">          <span class="p">-</span> <span class="k">name</span><span class="p">:</span> <span class="v">Windows classic deployments</span></div><div class="code" style="left:25.5px;top:332.5px;width:34px;text-align:right;color:#858585">577</div><div class="a" style="left:86px;top:331px;width:1px;height:27px;background:#404040"></div><div class="a" style="left:108px;top:331px;width:1px;height:27px;background:#404040"></div><div class="a" style="left:130px;top:331px;width:1px;height:27px;background:#404040"></div><div class="a" style="left:152px;top:331px;width:1px;height:27px;background:#404040"></div><div class="a" style="left:174px;top:331px;width:1px;height:27px;background:#404040"></div><div class="a" style="left:196px;top:331px;width:1px;height:27px;background:#404040"></div><div class="a" style="left:89.60000000000002px;top:343px;width:3px;height:3px;border-radius:1.5px;background:#474747"></div><div class="a" style="left:100.60000000000002px;top:343px;width:3px;height:3px;border-radius:1.5px;background:#474747"></div><div class="a" style="left:111.60000000000002px;top:343px;width:3px;height:3px;border-radius:1.5px;background:#474747"></div><div class="a" style="left:122.60000000000002px;top:343px;width:3px;height:3px;border-radius:1.5px;background:#474747"></div><div class="a" style="left:133.60000000000002px;top:343px;width:3px;height:3px;border-radius:1.5px;background:#474747"></div><div class="a" style="left:144.60000000000002px;top:343px;width:3px;height:3px;border-radius:1.5px;background:#474747"></div><div class="a" style="left:155.60000000000002px;top:343px;width:3px;height:3px;border-radius:1.5px;background:#474747"></div><div class="a" style="left:166.60000000000002px;top:343px;width:3px;height:3px;border-radius:1.5px;background:#474747"></div><div class="a" style="left:177.60000000000002px;top:343px;width:3px;height:3px;border-radius:1.5px;background:#474747"></div><div class="a" style="left:188.60000000000002px;top:343px;width:3px;height:3px;border-radius:1.5px;background:#474747"></div><div class="a" style="left:199.60000000000002px;top:343px;width:3px;height:3px;border-radius:1.5px;background:#474747"></div><div class="a" style="left:210.60000000000002px;top:343px;width:3px;height:3px;border-radius:1.5px;background:#474747"></div><div class="a" style="left:309.6px;top:343px;width:3px;height:3px;border-radius:1.5px;background:#474747"></div><div class="code" style="left:85.5px;top:332.5px">            <span class="k">tocHref</span><span class="p">:</span> <span class="v">/azure/virtual-machines/windows/classic/</span></div><div class="code" style="left:25.5px;top:359.5px;width:34px;text-align:right;color:#858585">578</div><div class="a" style="left:86px;top:358px;width:1px;height:27px;background:#404040"></div><div class="a" style="left:108px;top:358px;width:1px;height:27px;background:#404040"></div><div class="a" style="left:130px;top:358px;width:1px;height:27px;background:#404040"></div><div class="a" style="left:152px;top:358px;width:1px;height:27px;background:#404040"></div><div class="a" style="left:174px;top:358px;width:1px;height:27px;background:#404040"></div><div class="a" style="left:196px;top:358px;width:1px;height:27px;background:#404040"></div><div class="a" style="left:89.60000000000002px;top:370px;width:3px;height:3px;border-radius:1.5px;background:#474747"></div><div class="a" style="left:100.60000000000002px;top:370px;width:3px;height:3px;border-radius:1.5px;background:#474747"></div><div class="a" style="left:111.60000000000002px;top:370px;width:3px;height:3px;border-radius:1.5px;background:#474747"></div><div class="a" style="left:122.60000000000002px;top:370px;width:3px;height:3px;border-radius:1.5px;background:#474747"></div><div class="a" style="left:133.60000000000002px;top:370px;width:3px;height:3px;border-radius:1.5px;background:#474747"></div><div class="a" style="left:144.60000000000002px;top:370px;width:3px;height:3px;border-radius:1.5px;background:#474747"></div><div class="a" style="left:155.60000000000002px;top:370px;width:3px;height:3px;border-radius:1.5px;background:#474747"></div><div class="a" style="left:166.60000000000002px;top:370px;width:3px;height:3px;border-radius:1.5px;background:#474747"></div><div class="a" style="left:177.60000000000002px;top:370px;width:3px;height:3px;border-radius:1.5px;background:#474747"></div><div class="a" style="left:188.60000000000002px;top:370px;width:3px;height:3px;border-radius:1.5px;background:#474747"></div><div class="a" style="left:199.60000000000002px;top:370px;width:3px;height:3px;border-radius:1.5px;background:#474747"></div><div class="a" style="left:210.60000000000002px;top:370px;width:3px;height:3px;border-radius:1.5px;background:#474747"></div><div class="a" style="left:331.6px;top:370px;width:3px;height:3px;border-radius:1.5px;background:#474747"></div><div class="code" style="left:85.5px;top:359.5px">            <span class="k">topicHref</span><span class="p">:</span> <span class="v">/azure/virtual-machines/windows/classic/</span></div><div class="code" style="left:25.5px;top:386.5px;width:34px;text-align:right;color:#858585">579</div><div class="a" style="left:86px;top:385px;width:1px;height:27px;background:#404040"></div><div class="a" style="left:89.60000000000002px;top:397px;width:3px;height:3px;border-radius:1.5px;background:#474747"></div><div class="a" style="left:100.60000000000002px;top:397px;width:3px;height:3px;border-radius:1.5px;background:#474747"></div><div class="a" style="left:122.60000000000002px;top:397px;width:3px;height:3px;border-radius:1.5px;background:#474747"></div><div class="a" style="left:188.60000000000002px;top:397px;width:3px;height:3px;border-radius:1.5px;background:#474747"></div><div class="a" style="left:276.6px;top:397px;width:3px;height:3px;border-radius:1.5px;background:#474747"></div><div class="code" style="left:85.5px;top:386.5px">  <span class="p">-</span> <span class="k">name</span><span class="p">:</span> <span class="v">Virtual Network</span></div><div class="code" style="left:25.5px;top:413.5px;width:34px;text-align:right;color:#858585">580</div><div class="a" style="left:86px;top:412px;width:1px;height:27px;background:#404040"></div><div class="a" style="left:108px;top:412px;width:1px;height:27px;background:#404040"></div><div class="a" style="left:89.60000000000002px;top:424px;width:3px;height:3px;border-radius:1.5px;background:#474747"></div><div class="a" style="left:100.60000000000002px;top:424px;width:3px;height:3px;border-radius:1.5px;background:#474747"></div><div class="a" style="left:111.60000000000002px;top:424px;width:3px;height:3px;border-radius:1.5px;background:#474747"></div><div class="a" style="left:122.60000000000002px;top:424px;width:3px;height:3px;border-radius:1.5px;background:#474747"></div><div class="a" style="left:177.60000000000002px;top:424px;width:3px;height:3px;border-radius:1.5px;background:#474747"></div><div class="code" style="left:85.5px;top:413.5px">    <span class="k">uid</span><span class="p">:</span> <span class="v">test</span></div><div class="code" style="left:25.5px;top:440.5px;width:34px;text-align:right;color:#858585">581</div><div class="a" style="left:86px;top:439px;width:1px;height:27px;background:#404040"></div><div class="a" style="left:89.60000000000002px;top:451px;width:3px;height:3px;border-radius:1.5px;background:#474747"></div><div class="a" style="left:100.60000000000002px;top:451px;width:3px;height:3px;border-radius:1.5px;background:#474747"></div><div class="a" style="left:122.60000000000002px;top:451px;width:3px;height:3px;border-radius:1.5px;background:#474747"></div><div class="a" style="left:188.60000000000002px;top:451px;width:3px;height:3px;border-radius:1.5px;background:#474747"></div><div class="code" style="left:85.5px;top:440.5px">  <span class="p">-</span> <span class="k">name</span><span class="p">:</span> <span class="v">asdd</span></div><div class="code" style="left:25.5px;top:467.5px;width:34px;text-align:right;color:#858585">582</div><div class="a" style="left:86px;top:466px;width:1px;height:27px;background:#404040"></div><div class="a" style="left:108px;top:466px;width:1px;height:27px;background:#707070"></div><div class="a" style="left:89.60000000000002px;top:478px;width:3px;height:3px;border-radius:1.5px;background:#474747"></div><div class="a" style="left:100.60000000000002px;top:478px;width:3px;height:3px;border-radius:1.5px;background:#474747"></div><div class="a" style="left:111.60000000000002px;top:478px;width:3px;height:3px;border-radius:1.5px;background:#474747"></div><div class="a" style="left:122.60000000000002px;top:478px;width:3px;height:3px;border-radius:1.5px;background:#474747"></div><div class="a" style="left:221.60000000000002px;top:478px;width:3px;height:3px;border-radius:1.5px;background:#474747"></div><div class="code" style="left:85.5px;top:467.5px">    <span class="k">tocHref</span><span class="p">:</span> <span class="v">/azure/vpn-gateway/</span></div><div class="code" style="left:25.5px;top:494.5px;width:34px;text-align:right;color:#c6c6c6">583</div><div class="a" style="left:86px;top:493px;width:1px;height:27px;background:#404040"></div><div class="a" style="left:108px;top:493px;width:1px;height:27px;background:#707070"></div><div class="a" style="left:89.60000000000002px;top:505px;width:3px;height:3px;border-radius:1.5px;background:#474747"></div><div class="a" style="left:100.60000000000002px;top:505px;width:3px;height:3px;border-radius:1.5px;background:#474747"></div><div class="a" style="left:111.60000000000002px;top:505px;width:3px;height:3px;border-radius:1.5px;background:#474747"></div><div class="a" style="left:122.60000000000002px;top:505px;width:3px;height:3px;border-radius:1.5px;background:#474747"></div><div class="a" style="left:243.60000000000002px;top:505px;width:3px;height:3px;border-radius:1.5px;background:#474747"></div><div class="code" style="left:85.5px;top:494.5px">    <span class="k">topicHref</span><span class="p">:</span> <span class="v">/azure/vpn-gateway/</span></div><div class="code" style="left:25.5px;top:521.5px;width:34px;text-align:right;color:#858585">584</div><div class="a" style="left:341px;top:0px;width:2px;height:3px;background:#9a6e5a"></div><div class="a" style="left:407px;top:0px;width:2px;height:3px;background:#9a6e5a"></div><div class="a" style="left:594px;top:0px;width:2px;height:3px;background:#9a6e5a"></div><div class="a" style="left:704px;top:0px;width:2px;height:3px;background:#9a6e5a"></div><div class="a" style="left:0;top:0;width:1566px;height:4px;background:linear-gradient(#0009,#0000)"></div></div><svg class="ic" style="left:0;top:0" width="1916" height="1124" viewBox="0 0 1916 1124"><clipPath id="mmc"><rect x="1787" y="34" width="120" height="706"/></clipPath><g clip-path="url(#mmc)"><path d="M1791 34h4v1h-4zM1791 35h4v1h-4zM1791 36h7v1h-7zM1791 37h7v1h-7zM1791 38h9v1h-9zM1791 39h9v1h-9zM1791 40h4v1h-4zM1791 41h4v1h-4zM1791 42h7v1h-7zM1791 43h7v1h-7zM1791 44h9v1h-9zM1791 45h9v1h-9zM1791 46h4v1h-4zM1791 47h4v1h-4zM1791 48h7v1h-7zM1791 49h7v1h-7zM1791 50h9v1h-9zM1791 51h9v1h-9zM1791 52h4v1h-4zM1791 53h4v1h-4zM1791 54h7v1h-7zM1791 55h7v1h-7zM1791 56h9v1h-9zM1791 57h9v1h-9zM1791 58h4v1h-4zM1791 59h4v1h-4zM1791 60h7v1h-7zM1791 61h7v1h-7zM1791 62h9v1h-9zM1791 63h9v1h-9zM1791 64h4v1h-4zM1791 65h4v1h-4zM1791 66h7v1h-7zM1791 67h7v1h-7zM1791 68h9v1h-9zM1791 69h9v1h-9zM1791 70h4v1h-4zM1791 71h4v1h-4zM1791 72h7v1h-7zM1791 73h7v1h-7zM1791 74h9v1h-9zM1791 75h9v1h-9zM1791 76h4v1h-4zM1791 77h4v1h-4zM1791 78h7v1h-7zM1791 79h7v1h-7zM1791 80h9v1h-9zM1791 81h9v1h-9zM1791 82h4v1h-4zM1791 83h4v1h-4zM1791 84h7v1h-7zM1791 85h7v1h-7zM1791 86h9v1h-9zM1791 87h9v1h-9zM1791 88h4v1h-4zM1791 89h4v1h-4zM1791 90h7v1h-7zM1791 91h7v1h-7zM1791 92h9v1h-9zM1791 93h9v1h-9zM1791 94h5v1h-5zM1791 95h5v1h-5zM1795 96h4v1h-4zM1795 97h4v1h-4zM1795 98h7v1h-7zM1795 99h7v1h-7zM1795 100h9v1h-9zM1795 101h9v1h-9zM1795 102h4v1h-4zM1795 103h4v1h-4zM1795 104h7v1h-7zM1795 105h7v1h-7zM1795 106h9v1h-9zM1795 107h9v1h-9zM1795 108h4v1h-4zM1795 109h4v1h-4zM1795 110h7v1h-7zM1795 111h7v1h-7zM1795 112h9v1h-9zM1795 113h9v1h-9zM1795 114h4v1h-4zM1795 115h4v1h-4zM1795 116h7v1h-7zM1795 117h7v1h-7zM1795 118h9v1h-9zM1795 119h9v1h-9zM1795 120h4v1h-4zM1795 121h4v1h-4zM1795 122h7v1h-7zM1795 123h7v1h-7zM1795 124h9v1h-9zM1795 125h9v1h-9zM1795 126h4v1h-4zM1795 127h4v1h-4zM1795 128h7v1h-7zM1795 129h7v1h-7zM1795 130h9v1h-9zM1795 131h9v1h-9zM1795 132h4v1h-4zM1795 133h4v1h-4zM1795 134h7v1h-7zM1795 135h7v1h-7zM1795 136h9v1h-9zM1795 137h9v1h-9zM1791 138h4v1h-4zM1791 139h4v1h-4zM1791 140h7v1h-7zM1791 141h7v1h-7zM1791 142h9v1h-9zM1791 143h9v1h-9zM1791 144h4v1h-4zM1791 145h4v1h-4zM1791 146h7v1h-7zM1791 147h7v1h-7zM1791 148h9v1h-9zM1791 149h9v1h-9zM1791 150h4v1h-4zM1791 151h4v1h-4zM1791 152h7v1h-7zM1791 153h7v1h-7zM1791 154h9v1h-9zM1791 155h9v1h-9zM1791 156h4v1h-4zM1791 157h4v1h-4zM1791 158h7v1h-7zM1791 159h7v1h-7zM1791 160h9v1h-9zM1791 161h9v1h-9zM1791 162h4v1h-4zM1791 163h4v1h-4zM1791 164h7v1h-7zM1791 165h7v1h-7zM1791 166h9v1h-9zM1791 167h9v1h-9zM1791 168h5v1h-5zM1791 169h5v1h-5zM1795 170h4v1h-4zM1795 171h4v1h-4zM1795 172h7v1h-7zM1795 173h7v1h-7zM1795 174h9v1h-9zM1795 175h9v1h-9zM1795 176h4v1h-4zM1795 177h4v1h-4zM1795 178h7v1h-7zM1795 179h7v1h-7zM1795 180h9v1h-9zM1795 181h9v1h-9zM1795 182h4v1h-4zM1795 183h4v1h-4zM1795 184h7v1h-7zM1795 185h7v1h-7zM1795 186h9v1h-9zM1795 187h9v1h-9zM1791 188h4v1h-4zM1791 189h4v1h-4zM1791 190h7v1h-7zM1791 191h7v1h-7zM1791 192h9v1h-9zM1791 193h9v1h-9zM1791 194h4v1h-4zM1791 195h4v1h-4zM1791 196h7v1h-7zM1791 197h7v1h-7zM1791 198h9v1h-9zM1791 199h9v1h-9zM1791 200h4v1h-4zM1791 201h4v1h-4zM1791 202h7v1h-7zM1791 203h7v1h-7zM1791 204h9v1h-9zM1791 205h9v1h-9zM1791 206h4v1h-4zM1791 207h4v1h-4zM1791 208h7v1h-7zM1791 209h7v1h-7zM1791 210h9v1h-9zM1791 211h9v1h-9zM1791 212h4v1h-4zM1791 213h4v1h-4zM1791 214h7v1h-7zM1791 215h7v1h-7zM1791 216h9v1h-9zM1791 217h9v1h-9zM1791 218h4v1h-4zM1791 219h4v1h-4zM1791 220h7v1h-7zM1791 221h7v1h-7zM1791 222h9v1h-9zM1791 223h9v1h-9zM1791 224h4v1h-4zM1791 225h4v1h-4zM1791 226h7v1h-7zM1791 227h7v1h-7zM1791 228h9v1h-9zM1791 229h9v1h-9zM1791 230h4v1h-4zM1791 231h4v1h-4zM1791 232h7v1h-7zM1791 233h7v1h-7zM1791 234h9v1h-9zM1791 235h9v1h-9zM1791 236h4v1h-4zM1791 237h4v1h-4zM1791 238h7v1h-7zM1791 239h7v1h-7zM1791 240h9v1h-9zM1791 241h9v1h-9zM1791 242h4v1h-4zM1791 243h4v1h-4zM1791 244h7v1h-7zM1791 245h7v1h-7zM1791 246h9v1h-9zM1791 247h9v1h-9zM1791 248h4v1h-4zM1791 249h4v1h-4zM1791 250h7v1h-7zM1791 251h7v1h-7zM1791 252h9v1h-9zM1791 253h9v1h-9zM1791 254h4v1h-4zM1791 255h4v1h-4zM1791 256h7v1h-7zM1791 257h7v1h-7zM1791 258h9v1h-9zM1791 259h9v1h-9zM1791 260h4v1h-4zM1791 261h4v1h-4zM1791 262h7v1h-7zM1791 263h7v1h-7zM1791 264h9v1h-9zM1791 265h9v1h-9zM1791 266h5v1h-5zM1791 267h5v1h-5zM1795 268h4v1h-4zM1795 269h4v1h-4zM1795 270h7v1h-7zM1795 271h7v1h-7zM1795 272h9v1h-9zM1795 273h9v1h-9zM1795 274h4v1h-4zM1795 275h4v1h-4zM1795 276h7v1h-7zM1795 277h7v1h-7zM1795 278h9v1h-9zM1795 279h9v1h-9zM1795 280h4v1h-4zM1795 281h4v1h-4zM1795 282h7v1h-7zM1795 283h7v1h-7zM1795 284h9v1h-9zM1795 285h9v1h-9zM1795 286h4v1h-4zM1795 287h4v1h-4zM1795 288h7v1h-7zM1795 289h7v1h-7zM1795 290h9v1h-9zM1795 291h9v1h-9zM1795 292h4v1h-4zM1795 293h4v1h-4zM1795 294h7v1h-7zM1795 295h7v1h-7zM1795 296h9v1h-9zM1795 297h9v1h-9zM1791 298h4v1h-4zM1791 299h4v1h-4zM1791 300h7v1h-7zM1791 301h7v1h-7zM1791 302h9v1h-9zM1791 303h9v1h-9zM1791 304h5v1h-5zM1791 305h5v1h-5zM1795 306h4v1h-4zM1795 307h4v1h-4zM1795 308h7v1h-7zM1795 309h7v1h-7zM1795 310h9v1h-9zM1795 311h9v1h-9zM1795 312h4v1h-4zM1795 313h4v1h-4zM1795 314h7v1h-7zM1795 315h7v1h-7zM1795 316h9v1h-9zM1795 317h9v1h-9zM1795 318h4v1h-4zM1795 319h4v1h-4zM1795 320h7v1h-7zM1795 321h7v1h-7zM1795 322h9v1h-9zM1795 323h9v1h-9zM1795 324h4v1h-4zM1795 325h4v1h-4zM1795 326h7v1h-7zM1795 327h7v1h-7zM1795 328h9v1h-9zM1795 329h9v1h-9zM1795 330h4v1h-4zM1795 331h4v1h-4zM1795 332h7v1h-7zM1795 333h7v1h-7zM1795 334h9v1h-9zM1795 335h9v1h-9zM1795 336h4v1h-4zM1795 337h4v1h-4zM1795 338h7v1h-7zM1795 339h7v1h-7zM1795 340h9v1h-9zM1795 341h9v1h-9zM1791 342h4v1h-4zM1791 343h4v1h-4zM1791 344h7v1h-7zM1791 345h7v1h-7zM1791 346h9v1h-9zM1791 347h9v1h-9zM1791 348h5v1h-5zM1791 349h5v1h-5zM1795 350h4v1h-4zM1795 351h4v1h-4zM1795 352h7v1h-7zM1795 353h7v1h-7zM1795 354h9v1h-9zM1795 355h9v1h-9zM1795 356h4v1h-4zM1795 357h4v1h-4zM1795 358h7v1h-7zM1795 359h7v1h-7zM1795 360h9v1h-9zM1795 361h9v1h-9zM1791 362h4v1h-4zM1791 363h4v1h-4zM1791 364h7v1h-7zM1791 365h7v1h-7zM1791 366h9v1h-9zM1791 367h9v1h-9zM1791 368h4v1h-4zM1791 369h4v1h-4zM1791 370h7v1h-7zM1791 371h7v1h-7zM1791 372h9v1h-9zM1791 373h9v1h-9zM1791 374h4v1h-4zM1791 375h4v1h-4zM1791 376h7v1h-7zM1791 377h7v1h-7zM1791 378h9v1h-9zM1791 379h9v1h-9zM1791 380h4v1h-4zM1791 381h4v1h-4zM1791 382h7v1h-7zM1791 383h7v1h-7zM1791 384h9v1h-9zM1791 385h9v1h-9zM1791 386h4v1h-4zM1791 387h4v1h-4zM1791 388h7v1h-7zM1791 389h7v1h-7zM1791 390h9v1h-9zM1791 391h9v1h-9zM1791 392h4v1h-4zM1791 393h4v1h-4zM1791 394h7v1h-7zM1791 395h7v1h-7zM1791 396h9v1h-9zM1791 397h9v1h-9zM1791 398h5v1h-5zM1791 399h5v1h-5zM1795 400h4v1h-4zM1795 401h4v1h-4zM1795 402h7v1h-7zM1795 403h7v1h-7zM1795 404h9v1h-9zM1795 405h9v1h-9zM1795 406h4v1h-4zM1795 407h4v1h-4zM1795 408h7v1h-7zM1795 409h7v1h-7zM1795 410h9v1h-9zM1795 411h9v1h-9zM1791 412h4v1h-4zM1791 413h4v1h-4zM1791 414h7v1h-7zM1791 415h7v1h-7zM1791 416h9v1h-9zM1791 417h9v1h-9zM1791 418h4v1h-4zM1791 419h4v1h-4zM1791 420h7v1h-7zM1791 421h7v1h-7zM1791 422h9v1h-9zM1791 423h9v1h-9zM1791 424h4v1h-4zM1791 425h4v1h-4zM1791 426h7v1h-7zM1791 427h7v1h-7zM1791 428h9v1h-9zM1791 429h9v1h-9zM1791 430h4v1h-4zM1791 431h4v1h-4zM1791 432h7v1h-7zM1791 433h7v1h-7zM1791 434h9v1h-9zM1791 435h9v1h-9zM1791 436h4v1h-4zM1791 437h4v1h-4zM1791 438h7v1h-7zM1791 439h7v1h-7zM1791 440h9v1h-9zM1791 441h9v1h-9zM1791 442h4v1h-4zM1791 443h4v1h-4zM1791 444h7v1h-7zM1791 445h7v1h-7zM1791 446h9v1h-9zM1791 447h9v1h-9zM1791 448h4v1h-4zM1791 449h4v1h-4zM1791 450h7v1h-7zM1791 451h7v1h-7zM1791 452h9v1h-9zM1791 453h9v1h-9zM1791 454h4v1h-4zM1791 455h4v1h-4zM1791 456h7v1h-7zM1791 457h7v1h-7zM1791 458h9v1h-9zM1791 459h9v1h-9zM1791 460h4v1h-4zM1791 461h4v1h-4zM1791 462h7v1h-7zM1791 463h7v1h-7zM1791 464h9v1h-9zM1791 465h9v1h-9zM1791 466h4v1h-4zM1791 467h4v1h-4zM1791 468h7v1h-7zM1791 469h7v1h-7zM1791 470h9v1h-9zM1791 471h9v1h-9zM1791 472h4v1h-4zM1791 473h4v1h-4zM1791 474h7v1h-7zM1791 475h7v1h-7zM1791 476h9v1h-9zM1791 477h9v1h-9zM1791 478h4v1h-4zM1791 479h4v1h-4zM1791 480h7v1h-7zM1791 481h7v1h-7zM1791 482h9v1h-9zM1791 483h9v1h-9zM1791 484h4v1h-4zM1791 485h4v1h-4zM1791 486h7v1h-7zM1791 487h7v1h-7zM1791 488h9v1h-9zM1791 489h9v1h-9zM1791 490h4v1h-4zM1791 491h4v1h-4zM1791 492h7v1h-7zM1791 493h7v1h-7zM1791 494h9v1h-9zM1791 495h9v1h-9zM1791 496h4v1h-4zM1791 497h4v1h-4zM1791 498h7v1h-7zM1791 499h7v1h-7zM1791 500h9v1h-9zM1791 501h9v1h-9zM1791 502h4v1h-4zM1791 503h4v1h-4zM1791 504h7v1h-7zM1791 505h7v1h-7zM1791 506h9v1h-9zM1791 507h9v1h-9zM1791 508h4v1h-4zM1791 509h4v1h-4zM1791 510h7v1h-7zM1791 511h7v1h-7zM1791 512h9v1h-9zM1791 513h9v1h-9zM1791 514h4v1h-4zM1791 515h4v1h-4zM1791 516h7v1h-7zM1791 517h7v1h-7zM1791 518h9v1h-9zM1791 519h9v1h-9zM1791 520h5v1h-5zM1791 521h5v1h-5zM1795 522h4v1h-4zM1795 523h4v1h-4zM1795 524h7v1h-7zM1795 525h7v1h-7zM1795 526h9v1h-9zM1795 527h9v1h-9zM1795 528h4v1h-4zM1795 529h4v1h-4zM1795 530h7v1h-7zM1795 531h7v1h-7zM1795 532h9v1h-9zM1795 533h9v1h-9zM1795 534h4v1h-4zM1795 535h4v1h-4zM1795 536h7v1h-7zM1795 537h7v1h-7zM1795 538h9v1h-9zM1795 539h9v1h-9zM1791 540h4v1h-4zM1791 541h4v1h-4zM1791 542h7v1h-7zM1791 543h7v1h-7zM1791 544h9v1h-9zM1791 545h9v1h-9zM1791 546h4v1h-4zM1791 547h4v1h-4zM1791 548h7v1h-7zM1791 549h7v1h-7zM1791 550h9v1h-9zM1791 551h9v1h-9zM1791 552h4v1h-4zM1791 553h4v1h-4zM1791 554h7v1h-7zM1791 555h7v1h-7zM1791 556h9v1h-9zM1791 557h9v1h-9zM1791 558h4v1h-4zM1791 559h4v1h-4zM1791 560h7v1h-7zM1791 561h7v1h-7zM1791 562h9v1h-9zM1791 563h9v1h-9zM1791 564h4v1h-4zM1791 565h4v1h-4zM1791 566h7v1h-7zM1791 567h7v1h-7zM1791 568h9v1h-9zM1791 569h9v1h-9zM1791 570h4v1h-4zM1791 571h4v1h-4zM1791 572h7v1h-7zM1791 573h7v1h-7zM1791 574h9v1h-9zM1791 575h9v1h-9zM1791 576h4v1h-4zM1791 577h4v1h-4zM1791 578h7v1h-7zM1791 579h7v1h-7zM1791 580h9v1h-9zM1791 581h9v1h-9zM1791 582h4v1h-4zM1791 583h4v1h-4zM1791 584h7v1h-7zM1791 585h7v1h-7zM1791 586h9v1h-9zM1791 587h9v1h-9zM1791 588h4v1h-4zM1791 589h4v1h-4zM1791 590h7v1h-7zM1791 591h7v1h-7zM1791 592h9v1h-9zM1791 593h9v1h-9zM1791 594h4v1h-4zM1791 595h4v1h-4zM1791 596h7v1h-7zM1791 597h7v1h-7zM1791 598h9v1h-9zM1791 599h9v1h-9zM1791 600h4v1h-4zM1791 601h4v1h-4zM1791 602h7v1h-7zM1791 603h7v1h-7zM1791 604h9v1h-9zM1791 605h9v1h-9zM1791 606h4v1h-4zM1791 607h4v1h-4zM1791 608h7v1h-7zM1791 609h7v1h-7zM1791 610h9v1h-9zM1791 611h9v1h-9zM1791 612h4v1h-4zM1791 613h4v1h-4zM1791 614h7v1h-7zM1791 615h7v1h-7zM1791 616h9v1h-9zM1791 617h9v1h-9zM1791 618h5v1h-5zM1791 619h5v1h-5zM1795 620h4v1h-4zM1795 621h4v1h-4zM1795 622h7v1h-7zM1795 623h7v1h-7zM1795 624h9v1h-9zM1795 625h9v1h-9zM1795 626h4v1h-4zM1795 627h4v1h-4zM1795 628h7v1h-7zM1795 629h7v1h-7zM1795 630h9v1h-9zM1795 631h9v1h-9zM1795 632h4v1h-4zM1795 633h4v1h-4zM1795 634h7v1h-7zM1795 635h7v1h-7zM1795 636h9v1h-9zM1795 637h9v1h-9zM1795 638h4v1h-4zM1795 639h4v1h-4zM1795 640h7v1h-7zM1795 641h7v1h-7zM1795 642h9v1h-9zM1795 643h9v1h-9zM1795 644h4v1h-4zM1795 645h4v1h-4zM1795 646h7v1h-7zM1795 647h7v1h-7zM1795 648h9v1h-9zM1795 649h9v1h-9zM1795 650h4v1h-4zM1795 651h4v1h-4zM1795 652h7v1h-7zM1795 653h7v1h-7zM1795 654h9v1h-9zM1795 655h9v1h-9zM1795 656h4v1h-4zM1795 657h4v1h-4zM1795 658h7v1h-7zM1795 659h7v1h-7zM1795 660h9v1h-9zM1795 661h9v1h-9zM1791 662h4v1h-4zM1791 663h4v1h-4zM1791 664h7v1h-7zM1791 665h7v1h-7zM1791 666h9v1h-9zM1791 667h9v1h-9zM1795 670h4v1h-4zM1795 671h4v1h-4zM1795 672h7v1h-7zM1795 673h7v1h-7zM1795 674h9v1h-9zM1795 675h9v1h-9zM1795 676h5v1h-5zM1795 677h5v1h-5zM1799 678h4v1h-4zM1799 679h4v1h-4zM1799 680h7v1h-7zM1799 681h7v1h-7zM1799 682h9v1h-9zM1799 683h9v1h-9zM1795 684h4v1h-4zM1795 685h4v1h-4zM1795 686h7v1h-7zM1795 687h7v1h-7zM1795 688h9v1h-9zM1795 689h9v1h-9zM1795 690h5v1h-5zM1795 691h5v1h-5zM1799 692h4v1h-4zM1799 693h4v1h-4zM1799 694h7v1h-7zM1799 695h7v1h-7zM1799 696h9v1h-9zM1799 697h9v1h-9zM1791 698h4v1h-4zM1791 699h4v1h-4zM1791 700h3v1h-3zM1791 701h3v1h-3zM1791 702h4v1h-4zM1791 703h4v1h-4zM1791 704h7v1h-7zM1791 705h7v1h-7zM1791 706h9v1h-9zM1791 707h9v1h-9zM1799 668h9v1h-9zM1799 669h9v1h-9z" fill="#569cd6" fill-opacity="0.6"/><path d="M1797 34h2v1h-2zM1801 34h2v1h-2zM1804 34h1v1h-1zM1806 34h4v1h-4zM1797 35h6v1h-6zM1804 35h6v1h-6zM1800 36h2v1h-2zM1804 36h4v1h-4zM1809 36h3v1h-3zM1800 37h12v1h-12zM1802 38h2v1h-2zM1806 38h4v1h-4zM1811 38h3v1h-3zM1802 39h12v1h-12zM1797 40h1v1h-1zM1799 40h8v1h-8zM1797 41h10v1h-10zM1800 42h2v1h-2zM1804 42h7v1h-7zM1812 42h2v1h-2zM1815 42h3v1h-3zM1819 42h2v1h-2zM1823 42h4v1h-4zM1828 42h3v1h-3zM1800 43h31v1h-31zM1802 44h2v1h-2zM1806 44h7v1h-7zM1814 44h2v1h-2zM1817 44h3v1h-3zM1821 44h2v1h-2zM1825 44h4v1h-4zM1830 44h3v1h-3zM1802 45h31v1h-31zM1797 46h7v1h-7zM1797 47h7v1h-7zM1800 48h2v1h-2zM1804 48h5v1h-5zM1810 48h2v1h-2zM1813 48h3v1h-3zM1817 48h6v1h-6zM1824 48h7v1h-7zM1832 48h5v1h-5zM1800 49h37v1h-37zM1802 50h2v1h-2zM1806 50h5v1h-5zM1812 50h2v1h-2zM1815 50h3v1h-3zM1819 50h6v1h-6zM1826 50h7v1h-7zM1834 50h5v1h-5zM1802 51h37v1h-37zM1797 52h1v1h-1zM1799 52h8v1h-8zM1797 53h10v1h-10zM1800 54h2v1h-2zM1804 54h6v1h-6zM1812 54h1v1h-1zM1814 54h3v1h-3zM1818 54h3v1h-3zM1822 54h2v1h-2zM1826 54h4v1h-4zM1831 54h11v1h-11zM1800 55h42v1h-42zM1802 56h2v1h-2zM1806 56h6v1h-6zM1814 56h1v1h-1zM1816 56h3v1h-3zM1820 56h3v1h-3zM1824 56h2v1h-2zM1828 56h4v1h-4zM1833 56h11v1h-11zM1802 57h42v1h-42zM1797 58h2v1h-2zM1801 58h2v1h-2zM1804 58h1v1h-1zM1806 58h4v1h-4zM1797 59h6v1h-6zM1804 59h6v1h-6zM1800 60h2v1h-2zM1804 60h7v1h-7zM1812 60h4v1h-4zM1817 60h5v1h-5zM1800 61h22v1h-22zM1802 62h2v1h-2zM1806 62h7v1h-7zM1814 62h4v1h-4zM1819 62h5v1h-5zM1802 63h22v1h-22zM1797 64h2v1h-2zM1800 64h5v1h-5zM1797 65h8v1h-8zM1800 66h2v1h-2zM1804 66h6v1h-6zM1812 66h1v1h-1zM1814 66h7v1h-7zM1822 66h4v1h-4zM1827 66h4v1h-4zM1800 67h31v1h-31zM1802 68h2v1h-2zM1806 68h6v1h-6zM1814 68h1v1h-1zM1816 68h7v1h-7zM1824 68h4v1h-4zM1829 68h4v1h-4zM1802 69h31v1h-31zM1797 70h5v1h-5zM1803 70h4v1h-4zM1797 71h5v1h-5zM1803 71h4v1h-4zM1800 72h2v1h-2zM1804 72h4v1h-4zM1810 72h4v1h-4zM1815 72h7v1h-7zM1823 72h9v1h-9zM1833 72h4v1h-4zM1838 72h4v1h-4zM1800 73h42v1h-42zM1802 74h2v1h-2zM1806 74h4v1h-4zM1812 74h4v1h-4zM1817 74h7v1h-7zM1825 74h9v1h-9zM1835 74h4v1h-4zM1840 74h4v1h-4zM1802 75h42v1h-42zM1797 76h6v1h-6zM1804 76h1v1h-1zM1806 76h2v1h-2zM1812 76h2v1h-2zM1816 76h3v1h-3zM1820 76h3v1h-3zM1824 76h3v1h-3zM1797 77h6v1h-6zM1804 77h1v1h-1zM1806 77h5v1h-5zM1812 77h2v1h-2zM1815 77h4v1h-4zM1820 77h3v1h-3zM1824 77h3v1h-3zM1800 78h2v1h-2zM1804 78h7v1h-7zM1812 78h4v1h-4zM1817 78h11v1h-11zM1800 79h28v1h-28zM1802 80h2v1h-2zM1806 80h7v1h-7zM1814 80h4v1h-4zM1819 80h11v1h-11zM1802 81h28v1h-28zM1797 82h4v1h-4zM1802 82h1v1h-1zM1804 82h1v1h-1zM1806 82h1v1h-1zM1808 82h4v1h-4zM1813 82h3v1h-3zM1797 83h6v1h-6zM1804 83h3v1h-3zM1808 83h8v1h-8zM1800 84h2v1h-2zM1804 84h6v1h-6zM1811 84h2v1h-2zM1814 84h3v1h-3zM1818 84h2v1h-2zM1821 84h4v1h-4zM1826 84h7v1h-7zM1834 84h6v1h-6zM1800 85h40v1h-40zM1802 86h2v1h-2zM1806 86h6v1h-6zM1813 86h2v1h-2zM1816 86h3v1h-3zM1820 86h2v1h-2zM1823 86h4v1h-4zM1828 86h7v1h-7zM1836 86h6v1h-6zM1802 87h40v1h-40zM1797 88h2v1h-2zM1800 88h4v1h-4zM1805 88h1v1h-1zM1807 88h1v1h-1zM1809 88h4v1h-4zM1814 88h6v1h-6zM1797 89h7v1h-7zM1805 89h3v1h-3zM1809 89h11v1h-11zM1800 90h2v1h-2zM1804 90h6v1h-6zM1811 90h3v1h-3zM1815 90h11v1h-11zM1800 91h26v1h-26zM1802 92h2v1h-2zM1806 92h6v1h-6zM1813 92h3v1h-3zM1817 92h11v1h-11zM1802 93h26v1h-26zM1801 96h1v1h-1zM1803 96h7v1h-7zM1801 97h9v1h-9zM1804 98h2v1h-2zM1808 98h7v1h-7zM1816 98h4v1h-4zM1821 98h4v1h-4zM1826 98h2v1h-2zM1829 98h4v1h-4zM1834 98h2v1h-2zM1804 99h32v1h-32zM1806 100h2v1h-2zM1810 100h7v1h-7zM1818 100h4v1h-4zM1823 100h4v1h-4zM1828 100h2v1h-2zM1831 100h4v1h-4zM1836 100h2v1h-2zM1806 101h32v1h-32zM1801 102h4v1h-4zM1806 102h1v1h-1zM1808 102h1v1h-1zM1810 102h1v1h-1zM1812 102h4v1h-4zM1817 102h3v1h-3zM1801 103h6v1h-6zM1808 103h3v1h-3zM1812 103h8v1h-8zM1804 104h2v1h-2zM1808 104h8v1h-8zM1817 104h6v1h-6zM1804 105h19v1h-19zM1806 106h2v1h-2zM1810 106h8v1h-8zM1819 106h6v1h-6zM1806 107h19v1h-19zM1801 108h1v1h-1zM1803 108h10v1h-10zM1814 108h4v1h-4zM1801 109h12v1h-12zM1814 109h4v1h-4zM1804 110h2v1h-2zM1808 110h8v1h-8zM1817 110h6v1h-6zM1804 111h19v1h-19zM1806 112h2v1h-2zM1810 112h8v1h-8zM1819 112h6v1h-6zM1806 113h19v1h-19zM1801 114h4v1h-4zM1806 114h1v1h-1zM1808 114h1v1h-1zM1810 114h1v1h-1zM1812 114h4v1h-4zM1817 114h3v1h-3zM1801 115h6v1h-6zM1808 115h3v1h-3zM1812 115h8v1h-8zM1804 116h2v1h-2zM1808 116h8v1h-8zM1817 116h8v1h-8zM1826 116h2v1h-2zM1829 116h4v1h-4zM1834 116h1v1h-1zM1804 117h31v1h-31zM1806 118h2v1h-2zM1810 118h8v1h-8zM1819 118h8v1h-8zM1828 118h2v1h-2zM1831 118h4v1h-4zM1836 118h1v1h-1zM1806 119h31v1h-31zM1801 120h6v1h-6zM1808 120h1v1h-1zM1810 120h2v1h-2zM1816 120h2v1h-2zM1820 120h3v1h-3zM1824 120h3v1h-3zM1828 120h3v1h-3zM1801 121h6v1h-6zM1808 121h1v1h-1zM1810 121h5v1h-5zM1816 121h2v1h-2zM1819 121h4v1h-4zM1824 121h3v1h-3zM1828 121h3v1h-3zM1804 122h2v1h-2zM1808 122h7v1h-7zM1816 122h4v1h-4zM1821 122h8v1h-8zM1830 122h1v1h-1zM1832 122h11v1h-11zM1844 122h3v1h-3zM1848 122h6v1h-6zM1855 122h3v1h-3zM1859 122h2v1h-2zM1862 122h2v1h-2zM1865 122h7v1h-7zM1804 123h68v1h-68zM1806 124h2v1h-2zM1810 124h7v1h-7zM1818 124h4v1h-4zM1823 124h8v1h-8zM1832 124h1v1h-1zM1834 124h11v1h-11zM1846 124h3v1h-3zM1850 124h6v1h-6zM1857 124h3v1h-3zM1861 124h2v1h-2zM1864 124h2v1h-2zM1867 124h7v1h-7zM1806 125h68v1h-68zM1801 126h4v1h-4zM1806 126h4v1h-4zM1801 127h9v1h-9zM1804 128h2v1h-2zM1808 128h4v1h-4zM1813 128h2v1h-2zM1816 128h1v1h-1zM1818 128h7v1h-7zM1828 128h1v1h-1zM1804 129h25v1h-25zM1806 130h2v1h-2zM1810 130h4v1h-4zM1815 130h2v1h-2zM1818 130h1v1h-1zM1820 130h7v1h-7zM1830 130h1v1h-1zM1806 131h25v1h-25zM1801 132h2v1h-2zM1801 133h5v1h-5zM1804 134h2v1h-2zM1808 134h15v1h-15zM1824 134h4v1h-4zM1829 134h7v1h-7zM1837 134h8v1h-8zM1804 135h41v1h-41zM1806 136h2v1h-2zM1810 136h15v1h-15zM1826 136h4v1h-4zM1831 136h7v1h-7zM1839 136h8v1h-8zM1806 137h41v1h-41zM1797 138h2v1h-2zM1800 138h3v1h-3zM1805 138h3v1h-3zM1809 138h2v1h-2zM1813 138h4v1h-4zM1818 138h2v1h-2zM1797 139h6v1h-6zM1804 139h7v1h-7zM1812 139h8v1h-8zM1800 140h2v1h-2zM1804 140h13v1h-13zM1820 140h1v1h-1zM1800 141h21v1h-21zM1802 142h2v1h-2zM1806 142h13v1h-13zM1822 142h1v1h-1zM1802 143h21v1h-21zM1797 144h1v1h-1zM1799 144h10v1h-10zM1810 144h4v1h-4zM1797 145h12v1h-12zM1810 145h4v1h-4zM1800 146h2v1h-2zM1804 146h6v1h-6zM1812 146h1v1h-1zM1814 146h6v1h-6zM1821 146h10v1h-10zM1832 146h3v1h-3zM1836 146h6v1h-6zM1843 146h4v1h-4zM1848 146h4v1h-4zM1853 146h3v1h-3zM1857 146h4v1h-4zM1862 146h4v1h-4zM1867 146h3v1h-3zM1800 147h70v1h-70zM1802 148h2v1h-2zM1806 148h6v1h-6zM1814 148h1v1h-1zM1816 148h6v1h-6zM1823 148h10v1h-10zM1834 148h3v1h-3zM1838 148h6v1h-6zM1845 148h4v1h-4zM1850 148h4v1h-4zM1855 148h3v1h-3zM1859 148h4v1h-4zM1864 148h4v1h-4zM1869 148h3v1h-3zM1802 149h70v1h-70zM1797 150h7v1h-7zM1805 150h6v1h-6zM1812 150h1v1h-1zM1814 150h2v1h-2zM1797 151h7v1h-7zM1805 151h11v1h-11zM1800 152h2v1h-2zM1804 152h12v1h-12zM1800 153h16v1h-16zM1802 154h2v1h-2zM1806 154h12v1h-12zM1802 155h16v1h-16zM1797 156h7v1h-7zM1797 157h7v1h-7zM1800 158h2v1h-2zM1804 158h4v1h-4zM1809 158h3v1h-3zM1813 158h3v1h-3zM1817 158h2v1h-2zM1800 159h19v1h-19zM1802 160h2v1h-2zM1806 160h4v1h-4zM1811 160h3v1h-3zM1815 160h3v1h-3zM1819 160h2v1h-2zM1802 161h19v1h-19zM1797 162h1v1h-1zM1799 162h7v1h-7zM1797 163h9v1h-9zM1800 164h2v1h-2zM1804 164h4v1h-4zM1810 164h4v1h-4zM1815 164h5v1h-5zM1821 164h3v1h-3zM1825 164h4v1h-4zM1830 164h1v1h-1zM1832 164h2v1h-2zM1835 164h3v1h-3zM1839 164h3v1h-3zM1843 164h6v1h-6zM1850 164h1v1h-1zM1853 164h2v1h-2zM1856 164h3v1h-3zM1861 164h1v1h-1zM1863 164h2v1h-2zM1800 165h65v1h-65zM1802 166h2v1h-2zM1806 166h4v1h-4zM1812 166h4v1h-4zM1817 166h5v1h-5zM1823 166h3v1h-3zM1827 166h4v1h-4zM1832 166h1v1h-1zM1834 166h2v1h-2zM1837 166h3v1h-3zM1841 166h3v1h-3zM1845 166h6v1h-6zM1852 166h1v1h-1zM1855 166h2v1h-2zM1858 166h3v1h-3zM1863 166h1v1h-1zM1865 166h2v1h-2zM1802 167h65v1h-65zM1801 170h7v1h-7zM1801 171h7v1h-7zM1804 172h2v1h-2zM1808 172h3v1h-3zM1812 172h1v1h-1zM1814 172h2v1h-2zM1817 172h6v1h-6zM1824 172h1v1h-1zM1826 172h10v1h-10zM1804 173h32v1h-32zM1806 174h2v1h-2zM1810 174h3v1h-3zM1814 174h1v1h-1zM1816 174h2v1h-2zM1819 174h6v1h-6zM1826 174h1v1h-1zM1828 174h10v1h-10zM1806 175h32v1h-32zM1801 176h5v1h-5zM1807 176h4v1h-4zM1801 177h5v1h-5zM1807 177h4v1h-4zM1804 178h2v1h-2zM1808 178h4v1h-4zM1813 178h8v1h-8zM1804 179h17v1h-17zM1806 180h2v1h-2zM1810 180h4v1h-4zM1815 180h8v1h-8zM1806 181h17v1h-17zM1801 182h3v1h-3zM1805 182h4v1h-4zM1801 183h8v1h-8zM1804 184h2v1h-2zM1808 184h3v1h-3zM1812 184h1v1h-1zM1814 184h6v1h-6zM1804 185h16v1h-16zM1806 186h2v1h-2zM1810 186h3v1h-3zM1814 186h1v1h-1zM1816 186h6v1h-6zM1806 187h16v1h-16zM1797 188h1v1h-1zM1799 188h10v1h-10zM1810 188h4v1h-4zM1797 189h12v1h-12zM1810 189h4v1h-4zM1800 190h2v1h-2zM1804 190h3v1h-3zM1808 190h1v1h-1zM1810 190h7v1h-7zM1820 190h1v1h-1zM1800 191h21v1h-21zM1802 192h2v1h-2zM1806 192h3v1h-3zM1810 192h1v1h-1zM1812 192h7v1h-7zM1822 192h1v1h-1zM1802 193h21v1h-21zM1797 194h1v1h-1zM1799 194h10v1h-10zM1810 194h4v1h-4zM1797 195h12v1h-12zM1810 195h4v1h-4zM1800 196h2v1h-2zM1804 196h6v1h-6zM1811 196h3v1h-3zM1815 196h5v1h-5zM1800 197h20v1h-20zM1802 198h2v1h-2zM1806 198h6v1h-6zM1813 198h3v1h-3zM1817 198h5v1h-5zM1802 199h20v1h-20zM1797 200h7v1h-7zM1797 201h7v1h-7zM1800 202h2v1h-2zM1804 202h4v1h-4zM1810 202h8v1h-8zM1800 203h18v1h-18zM1802 204h2v1h-2zM1806 204h4v1h-4zM1812 204h8v1h-8zM1802 205h18v1h-18zM1797 206h3v1h-3zM1801 206h4v1h-4zM1797 207h8v1h-8zM1800 208h2v1h-2zM1804 208h6v1h-6zM1811 208h3v1h-3zM1815 208h12v1h-12zM1800 209h27v1h-27zM1802 210h2v1h-2zM1806 210h6v1h-6zM1813 210h3v1h-3zM1817 210h12v1h-12zM1802 211h27v1h-27zM1797 212h4v1h-4zM1802 212h4v1h-4zM1797 213h9v1h-9zM1800 214h2v1h-2zM1804 214h7v1h-7zM1812 214h1v1h-1zM1814 214h17v1h-17zM1800 215h31v1h-31zM1802 216h2v1h-2zM1806 216h7v1h-7zM1814 216h1v1h-1zM1816 216h17v1h-17zM1802 217h31v1h-31zM1797 218h3v1h-3zM1801 218h4v1h-4zM1806 218h1v1h-1zM1797 219h10v1h-10zM1800 220h2v1h-2zM1804 220h3v1h-3zM1808 220h1v1h-1zM1810 220h6v1h-6zM1818 220h2v1h-2zM1800 221h20v1h-20zM1802 222h2v1h-2zM1806 222h3v1h-3zM1810 222h1v1h-1zM1812 222h6v1h-6zM1820 222h2v1h-2zM1802 223h20v1h-20zM1797 224h2v1h-2zM1800 224h4v1h-4zM1797 225h7v1h-7zM1800 226h2v1h-2zM1804 226h7v1h-7zM1812 226h1v1h-1zM1814 226h15v1h-15zM1830 226h5v1h-5zM1800 227h35v1h-35zM1802 228h2v1h-2zM1806 228h7v1h-7zM1814 228h1v1h-1zM1816 228h15v1h-15zM1832 228h5v1h-5zM1802 229h35v1h-35zM1797 230h3v1h-3zM1801 230h4v1h-4zM1797 231h8v1h-8zM1800 232h2v1h-2zM1804 232h5v1h-5zM1812 232h1v1h-1zM1814 232h1v1h-1zM1816 232h2v1h-2zM1819 232h2v1h-2zM1800 233h21v1h-21zM1802 234h2v1h-2zM1806 234h5v1h-5zM1814 234h1v1h-1zM1816 234h1v1h-1zM1818 234h2v1h-2zM1821 234h2v1h-2zM1802 235h21v1h-21zM1797 236h5v1h-5zM1803 236h4v1h-4zM1797 237h5v1h-5zM1803 237h4v1h-4zM1800 238h2v1h-2zM1804 238h7v1h-7zM1812 238h1v1h-1zM1814 238h11v1h-11zM1800 239h25v1h-25zM1802 240h2v1h-2zM1806 240h7v1h-7zM1814 240h1v1h-1zM1816 240h11v1h-11zM1802 241h25v1h-25zM1797 242h1v1h-1zM1799 242h7v1h-7zM1797 243h9v1h-9zM1800 244h2v1h-2zM1804 244h8v1h-8zM1813 244h5v1h-5zM1800 245h18v1h-18zM1802 246h2v1h-2zM1806 246h8v1h-8zM1815 246h5v1h-5zM1802 247h18v1h-18zM1797 248h1v1h-1zM1799 248h10v1h-10zM1810 248h4v1h-4zM1797 249h12v1h-12zM1810 249h4v1h-4zM1800 250h2v1h-2zM1804 250h6v1h-6zM1811 250h3v1h-3zM1815 250h10v1h-10zM1826 250h2v1h-2zM1829 250h4v1h-4zM1834 250h2v1h-2zM1800 251h36v1h-36zM1802 252h2v1h-2zM1806 252h6v1h-6zM1813 252h3v1h-3zM1817 252h10v1h-10zM1828 252h2v1h-2zM1831 252h4v1h-4zM1836 252h2v1h-2zM1802 253h36v1h-36zM1797 254h6v1h-6zM1804 254h1v1h-1zM1806 254h2v1h-2zM1812 254h2v1h-2zM1816 254h3v1h-3zM1820 254h3v1h-3zM1824 254h3v1h-3zM1797 255h6v1h-6zM1804 255h1v1h-1zM1806 255h5v1h-5zM1812 255h2v1h-2zM1815 255h4v1h-4zM1820 255h3v1h-3zM1824 255h3v1h-3zM1800 256h2v1h-2zM1804 256h4v1h-4zM1809 256h2v1h-2zM1800 257h11v1h-11zM1802 258h2v1h-2zM1806 258h4v1h-4zM1811 258h2v1h-2zM1802 259h11v1h-11zM1797 260h2v1h-2zM1801 260h2v1h-2zM1804 260h1v1h-1zM1806 260h4v1h-4zM1797 261h6v1h-6zM1804 261h6v1h-6zM1800 262h2v1h-2zM1804 262h6v1h-6zM1812 262h1v1h-1zM1814 262h17v1h-17zM1800 263h31v1h-31zM1802 264h2v1h-2zM1806 264h6v1h-6zM1814 264h1v1h-1zM1816 264h17v1h-17zM1802 265h31v1h-31zM1801 268h3v1h-3zM1805 268h4v1h-4zM1801 269h8v1h-8zM1804 270h2v1h-2zM1808 270h12v1h-12zM1822 270h3v1h-3zM1804 271h21v1h-21zM1806 272h2v1h-2zM1810 272h12v1h-12zM1824 272h3v1h-3zM1806 273h21v1h-21zM1801 274h2v1h-2zM1804 274h5v1h-5zM1801 275h8v1h-8zM1804 276h2v1h-2zM1808 276h7v1h-7zM1816 276h4v1h-4zM1804 277h17v1h-17zM1806 278h2v1h-2zM1810 278h7v1h-7zM1818 278h4v1h-4zM1806 279h17v1h-17zM1801 280h2v1h-2zM1804 280h4v1h-4zM1801 281h7v1h-7zM1804 282h2v1h-2zM1808 282h4v1h-4zM1814 282h4v1h-4zM1820 282h4v1h-4zM1825 282h2v1h-2zM1804 283h23v1h-23zM1806 284h2v1h-2zM1810 284h4v1h-4zM1816 284h4v1h-4zM1822 284h4v1h-4zM1827 284h2v1h-2zM1806 285h23v1h-23zM1801 286h4v1h-4zM1806 286h1v1h-1zM1808 286h1v1h-1zM1810 286h1v1h-1zM1812 286h4v1h-4zM1817 286h3v1h-3zM1801 287h6v1h-6zM1808 287h3v1h-3zM1812 287h8v1h-8zM1804 288h2v1h-2zM1808 288h3v1h-3zM1812 288h2v1h-2zM1815 288h4v1h-4zM1820 288h6v1h-6zM1827 288h4v1h-4zM1832 288h5v1h-5zM1838 288h3v1h-3zM1842 288h6v1h-6zM1849 288h4v1h-4zM1854 288h4v1h-4zM1859 288h3v1h-3zM1863 288h5v1h-5zM1869 288h5v1h-5zM1804 289h70v1h-70zM1806 290h2v1h-2zM1810 290h3v1h-3zM1814 290h2v1h-2zM1817 290h4v1h-4zM1822 290h6v1h-6zM1829 290h4v1h-4zM1834 290h5v1h-5zM1840 290h3v1h-3zM1844 290h6v1h-6zM1851 290h4v1h-4zM1856 290h4v1h-4zM1861 290h3v1h-3zM1865 290h5v1h-5zM1871 290h5v1h-5zM1806 291h70v1h-70zM1801 292h4v1h-4zM1806 292h1v1h-1zM1808 292h1v1h-1zM1810 292h1v1h-1zM1812 292h4v1h-4zM1817 292h3v1h-3zM1801 293h6v1h-6zM1808 293h3v1h-3zM1812 293h8v1h-8zM1804 294h2v1h-2zM1808 294h7v1h-7zM1816 294h6v1h-6zM1823 294h10v1h-10zM1804 295h29v1h-29zM1806 296h2v1h-2zM1810 296h7v1h-7zM1818 296h6v1h-6zM1825 296h10v1h-10zM1806 297h29v1h-29zM1797 298h6v1h-6zM1804 298h1v1h-1zM1806 298h2v1h-2zM1812 298h2v1h-2zM1816 298h3v1h-3zM1820 298h3v1h-3zM1824 298h3v1h-3zM1797 299h6v1h-6zM1804 299h1v1h-1zM1806 299h5v1h-5zM1812 299h2v1h-2zM1815 299h4v1h-4zM1820 299h3v1h-3zM1824 299h3v1h-3zM1800 300h2v1h-2zM1804 300h6v1h-6zM1811 300h3v1h-3zM1815 300h5v1h-5zM1821 300h3v1h-3zM1825 300h6v1h-6zM1832 300h7v1h-7zM1841 300h1v1h-1zM1843 300h4v1h-4zM1800 301h47v1h-47zM1802 302h2v1h-2zM1806 302h6v1h-6zM1813 302h3v1h-3zM1817 302h5v1h-5zM1823 302h3v1h-3zM1827 302h6v1h-6zM1834 302h7v1h-7zM1843 302h1v1h-1zM1845 302h4v1h-4zM1802 303h47v1h-47zM1801 306h2v1h-2zM1804 306h5v1h-5zM1801 307h8v1h-8zM1804 308h2v1h-2zM1808 308h7v1h-7zM1816 308h4v1h-4zM1821 308h5v1h-5zM1804 309h22v1h-22zM1806 310h2v1h-2zM1810 310h7v1h-7zM1818 310h4v1h-4zM1823 310h5v1h-5zM1806 311h22v1h-22zM1801 312h7v1h-7zM1801 313h7v1h-7zM1804 314h2v1h-2zM1808 314h3v1h-3zM1812 314h1v1h-1zM1814 314h6v1h-6zM1821 314h3v1h-3zM1825 314h6v1h-6zM1832 314h1v1h-1zM1835 314h4v1h-4zM1840 314h1v1h-1zM1842 314h3v1h-3zM1846 314h8v1h-8zM1804 315h50v1h-50zM1806 316h2v1h-2zM1810 316h3v1h-3zM1814 316h1v1h-1zM1816 316h6v1h-6zM1823 316h3v1h-3zM1827 316h6v1h-6zM1834 316h1v1h-1zM1837 316h4v1h-4zM1842 316h1v1h-1zM1844 316h3v1h-3zM1848 316h8v1h-8zM1806 317h50v1h-50zM1801 318h1v1h-1zM1803 318h8v1h-8zM1801 319h10v1h-10zM1804 320h2v1h-2zM1808 320h3v1h-3zM1812 320h1v1h-1zM1814 320h2v1h-2zM1817 320h6v1h-6zM1824 320h4v1h-4zM1829 320h5v1h-5zM1836 320h2v1h-2zM1804 321h34v1h-34zM1806 322h2v1h-2zM1810 322h3v1h-3zM1814 322h1v1h-1zM1816 322h2v1h-2zM1819 322h6v1h-6zM1826 322h4v1h-4zM1831 322h5v1h-5zM1838 322h2v1h-2zM1806 323h34v1h-34zM1801 324h6v1h-6zM1808 324h1v1h-1zM1810 324h2v1h-2zM1816 324h2v1h-2zM1820 324h3v1h-3zM1824 324h3v1h-3zM1828 324h3v1h-3zM1801 325h6v1h-6zM1808 325h1v1h-1zM1810 325h5v1h-5zM1816 325h2v1h-2zM1819 325h4v1h-4zM1824 325h3v1h-3zM1828 325h3v1h-3zM1804 326h2v1h-2zM1808 326h3v1h-3zM1812 326h2v1h-2zM1815 326h4v1h-4zM1820 326h5v1h-5zM1826 326h9v1h-9zM1804 327h31v1h-31zM1806 328h2v1h-2zM1810 328h3v1h-3zM1814 328h2v1h-2zM1817 328h4v1h-4zM1822 328h5v1h-5zM1828 328h9v1h-9zM1806 329h31v1h-31zM1801 330h1v1h-1zM1803 330h10v1h-10zM1814 330h4v1h-4zM1801 331h12v1h-12zM1814 331h4v1h-4zM1804 332h2v1h-2zM1808 332h7v1h-7zM1816 332h6v1h-6zM1823 332h1v1h-1zM1804 333h20v1h-20zM1806 334h2v1h-2zM1810 334h7v1h-7zM1818 334h6v1h-6zM1825 334h1v1h-1zM1806 335h20v1h-20zM1801 336h2v1h-2zM1801 337h5v1h-5zM1804 338h2v1h-2zM1808 338h7v1h-7zM1816 338h4v1h-4zM1821 338h9v1h-9zM1831 338h7v1h-7zM1839 338h3v1h-3zM1843 338h6v1h-6zM1850 338h5v1h-5zM1856 338h5v1h-5zM1863 338h2v1h-2zM1866 338h4v1h-4zM1871 338h1v1h-1zM1804 339h68v1h-68zM1806 340h2v1h-2zM1810 340h7v1h-7zM1818 340h4v1h-4zM1823 340h9v1h-9zM1833 340h7v1h-7zM1841 340h3v1h-3zM1845 340h6v1h-6zM1852 340h5v1h-5zM1858 340h5v1h-5zM1865 340h2v1h-2zM1868 340h4v1h-4zM1873 340h1v1h-1zM1806 341h68v1h-68zM1797 342h4v1h-4zM1802 342h4v1h-4zM1797 343h9v1h-9zM1800 344h2v1h-2zM1804 344h5v1h-5zM1810 344h2v1h-2zM1800 345h12v1h-12zM1802 346h2v1h-2zM1806 346h5v1h-5zM1812 346h2v1h-2zM1802 347h12v1h-12zM1801 350h2v1h-2zM1805 350h2v1h-2zM1808 350h1v1h-1zM1810 350h4v1h-4zM1801 351h6v1h-6zM1808 351h6v1h-6zM1804 352h2v1h-2zM1808 352h18v1h-18zM1827 352h3v1h-3zM1831 352h6v1h-6zM1838 352h5v1h-5zM1844 352h5v1h-5zM1850 352h7v1h-7zM1804 353h53v1h-53zM1806 354h2v1h-2zM1810 354h18v1h-18zM1829 354h3v1h-3zM1833 354h6v1h-6zM1840 354h5v1h-5zM1846 354h5v1h-5zM1852 354h7v1h-7zM1806 355h53v1h-53zM1801 356h2v1h-2zM1804 356h5v1h-5zM1801 357h8v1h-8zM1804 358h2v1h-2zM1808 358h4v1h-4zM1813 358h5v1h-5zM1819 358h3v1h-3zM1823 358h9v1h-9zM1833 358h4v1h-4zM1804 359h33v1h-33zM1806 360h2v1h-2zM1810 360h4v1h-4zM1815 360h5v1h-5zM1821 360h3v1h-3zM1825 360h9v1h-9zM1835 360h4v1h-4zM1806 361h33v1h-33zM1797 362h3v1h-3zM1801 362h4v1h-4zM1806 362h1v1h-1zM1797 363h10v1h-10zM1800 364h2v1h-2zM1804 364h4v1h-4zM1809 364h4v1h-4zM1814 364h1v1h-1zM1800 365h15v1h-15zM1802 366h2v1h-2zM1806 366h4v1h-4zM1811 366h4v1h-4zM1816 366h1v1h-1zM1802 367h15v1h-15zM1797 368h1v1h-1zM1799 368h2v1h-2zM1802 368h2v1h-2zM1797 369h8v1h-8zM1800 370h2v1h-2zM1804 370h3v1h-3zM1808 370h2v1h-2zM1811 370h4v1h-4zM1816 370h7v1h-7zM1824 370h7v1h-7zM1833 370h3v1h-3zM1800 371h36v1h-36zM1802 372h2v1h-2zM1806 372h3v1h-3zM1810 372h2v1h-2zM1813 372h4v1h-4zM1818 372h7v1h-7zM1826 372h7v1h-7zM1835 372h3v1h-3zM1802 373h36v1h-36zM1797 374h1v1h-1zM1799 374h7v1h-7zM1797 375h9v1h-9zM1800 376h2v1h-2zM1804 376h3v1h-3zM1808 376h1v1h-1zM1810 376h2v1h-2zM1813 376h2v1h-2zM1816 376h1v1h-1zM1818 376h2v1h-2zM1821 376h2v1h-2zM1800 377h23v1h-23zM1802 378h2v1h-2zM1806 378h3v1h-3zM1810 378h1v1h-1zM1812 378h2v1h-2zM1815 378h2v1h-2zM1818 378h1v1h-1zM1820 378h2v1h-2zM1823 378h2v1h-2zM1802 379h23v1h-23zM1797 380h6v1h-6zM1804 380h2v1h-2zM1797 381h9v1h-9zM1800 382h2v1h-2zM1804 382h6v1h-6zM1811 382h11v1h-11zM1800 383h23v1h-23zM1802 384h2v1h-2zM1806 384h6v1h-6zM1813 384h11v1h-11zM1802 385h23v1h-23zM1797 386h2v1h-2zM1800 386h3v1h-3zM1805 386h3v1h-3zM1809 386h2v1h-2zM1813 386h4v1h-4zM1818 386h2v1h-2zM1797 387h6v1h-6zM1804 387h7v1h-7zM1812 387h8v1h-8zM1800 388h2v1h-2zM1804 388h11v1h-11zM1816 388h2v1h-2zM1819 388h4v1h-4zM1824 388h4v1h-4zM1831 388h1v1h-1zM1800 389h32v1h-32zM1802 390h2v1h-2zM1806 390h11v1h-11zM1818 390h2v1h-2zM1821 390h4v1h-4zM1826 390h4v1h-4zM1833 390h1v1h-1zM1802 391h32v1h-32zM1797 392h1v1h-1zM1799 392h7v1h-7zM1797 393h9v1h-9zM1800 394h2v1h-2zM1804 394h6v1h-6zM1811 394h10v1h-10zM1800 395h21v1h-21zM1802 396h2v1h-2zM1806 396h6v1h-6zM1813 396h10v1h-10zM1802 397h21v1h-21zM1801 400h5v1h-5zM1807 400h4v1h-4zM1801 401h5v1h-5zM1807 401h4v1h-4zM1804 402h2v1h-2zM1808 402h13v1h-13zM1822 402h3v1h-3zM1826 402h6v1h-6zM1833 402h1v1h-1zM1836 402h2v1h-2zM1840 402h2v1h-2zM1843 402h4v1h-4zM1848 402h1v1h-1zM1804 403h45v1h-45zM1806 404h2v1h-2zM1810 404h13v1h-13zM1824 404h3v1h-3zM1828 404h6v1h-6zM1835 404h1v1h-1zM1838 404h2v1h-2zM1842 404h2v1h-2zM1845 404h4v1h-4zM1850 404h1v1h-1zM1806 405h45v1h-45zM1801 406h7v1h-7zM1801 407h7v1h-7zM1804 408h2v1h-2zM1808 408h5v1h-5zM1814 408h5v1h-5zM1820 408h1v1h-1zM1822 408h10v1h-10zM1804 409h28v1h-28zM1806 410h2v1h-2zM1810 410h5v1h-5zM1816 410h5v1h-5zM1822 410h1v1h-1zM1824 410h10v1h-10zM1806 411h28v1h-28zM1797 412h2v1h-2zM1800 412h5v1h-5zM1797 413h8v1h-8zM1800 414h2v1h-2zM1804 414h6v1h-6zM1811 414h3v1h-3zM1815 414h4v1h-4zM1820 414h3v1h-3zM1824 414h2v1h-2zM1828 414h4v1h-4zM1833 414h3v1h-3zM1800 415h36v1h-36zM1802 416h2v1h-2zM1806 416h6v1h-6zM1813 416h3v1h-3zM1817 416h4v1h-4zM1822 416h3v1h-3zM1826 416h2v1h-2zM1830 416h4v1h-4zM1835 416h3v1h-3zM1802 417h36v1h-36zM1797 418h3v1h-3zM1801 418h4v1h-4zM1806 418h1v1h-1zM1797 419h10v1h-10zM1800 420h2v1h-2zM1804 420h4v1h-4zM1810 420h4v1h-4zM1815 420h7v1h-7zM1823 420h6v1h-6zM1800 421h29v1h-29zM1802 422h2v1h-2zM1806 422h4v1h-4zM1812 422h4v1h-4zM1817 422h7v1h-7zM1825 422h6v1h-6zM1802 423h29v1h-29zM1797 424h1v1h-1zM1799 424h2v1h-2zM1802 424h2v1h-2zM1797 425h8v1h-8zM1800 426h2v1h-2zM1804 426h6v1h-6zM1811 426h10v1h-10zM1800 427h21v1h-21zM1802 428h2v1h-2zM1806 428h6v1h-6zM1813 428h10v1h-10zM1802 429h21v1h-21zM1797 430h2v1h-2zM1800 430h4v1h-4zM1797 431h7v1h-7zM1800 432h2v1h-2zM1804 432h7v1h-7zM1812 432h15v1h-15zM1828 432h6v1h-6zM1800 433h34v1h-34zM1802 434h2v1h-2zM1806 434h7v1h-7zM1814 434h15v1h-15zM1830 434h6v1h-6zM1802 435h34v1h-34zM1797 436h1v1h-1zM1799 436h10v1h-10zM1810 436h4v1h-4zM1797 437h12v1h-12zM1810 437h4v1h-4zM1800 438h2v1h-2zM1804 438h7v1h-7zM1812 438h4v1h-4zM1817 438h8v1h-8zM1826 438h5v1h-5zM1832 438h2v1h-2zM1835 438h3v1h-3zM1800 439h38v1h-38zM1802 440h2v1h-2zM1806 440h7v1h-7zM1814 440h4v1h-4zM1819 440h8v1h-8zM1828 440h5v1h-5zM1834 440h2v1h-2zM1837 440h3v1h-3zM1802 441h38v1h-38zM1797 442h2v1h-2zM1801 442h2v1h-2zM1804 442h1v1h-1zM1806 442h4v1h-4zM1797 443h6v1h-6zM1804 443h6v1h-6zM1800 444h2v1h-2zM1804 444h4v1h-4zM1809 444h2v1h-2zM1812 444h3v1h-3zM1816 444h2v1h-2zM1820 444h4v1h-4zM1825 444h3v1h-3zM1829 444h3v1h-3zM1833 444h6v1h-6zM1840 444h5v1h-5zM1846 444h3v1h-3zM1850 444h8v1h-8zM1800 445h58v1h-58zM1802 446h2v1h-2zM1806 446h4v1h-4zM1811 446h2v1h-2zM1814 446h3v1h-3zM1818 446h2v1h-2zM1822 446h4v1h-4zM1827 446h3v1h-3zM1831 446h3v1h-3zM1835 446h6v1h-6zM1842 446h5v1h-5zM1848 446h3v1h-3zM1852 446h8v1h-8zM1802 447h58v1h-58zM1797 448h1v1h-1zM1799 448h8v1h-8zM1797 449h10v1h-10zM1800 450h2v1h-2zM1804 450h5v1h-5zM1812 450h5v1h-5zM1818 450h7v1h-7zM1826 450h4v1h-4zM1800 451h30v1h-30zM1802 452h2v1h-2zM1806 452h5v1h-5zM1814 452h5v1h-5zM1820 452h7v1h-7zM1828 452h4v1h-4zM1802 453h30v1h-30zM1797 454h1v1h-1zM1799 454h8v1h-8zM1797 455h10v1h-10zM1800 456h2v1h-2zM1804 456h8v1h-8zM1813 456h9v1h-9zM1823 456h3v1h-3zM1827 456h5v1h-5zM1833 456h3v1h-3zM1837 456h6v1h-6zM1844 456h4v1h-4zM1849 456h4v1h-4zM1854 456h3v1h-3zM1859 456h2v1h-2zM1862 456h4v1h-4zM1867 456h1v1h-1zM1800 457h68v1h-68zM1802 458h2v1h-2zM1806 458h8v1h-8zM1815 458h9v1h-9zM1825 458h3v1h-3zM1829 458h5v1h-5zM1835 458h3v1h-3zM1839 458h6v1h-6zM1846 458h4v1h-4zM1851 458h4v1h-4zM1856 458h3v1h-3zM1861 458h2v1h-2zM1864 458h4v1h-4zM1869 458h1v1h-1zM1802 459h68v1h-68zM1797 460h7v1h-7zM1797 461h7v1h-7zM1800 462h2v1h-2zM1804 462h3v1h-3zM1808 462h2v1h-2zM1811 462h4v1h-4zM1816 462h2v1h-2zM1819 462h3v1h-3zM1823 462h2v1h-2zM1827 462h4v1h-4zM1832 462h2v1h-2zM1800 463h34v1h-34zM1802 464h2v1h-2zM1806 464h3v1h-3zM1810 464h2v1h-2zM1813 464h4v1h-4zM1818 464h2v1h-2zM1821 464h3v1h-3zM1825 464h2v1h-2zM1829 464h4v1h-4zM1834 464h2v1h-2zM1802 465h34v1h-34zM1797 466h1v1h-1zM1799 466h2v1h-2zM1802 466h2v1h-2zM1797 467h8v1h-8zM1800 468h2v1h-2zM1804 468h3v1h-3zM1808 468h2v1h-2zM1811 468h4v1h-4zM1816 468h4v1h-4zM1823 468h1v1h-1zM1825 468h1v1h-1zM1827 468h5v1h-5zM1800 469h32v1h-32zM1802 470h2v1h-2zM1806 470h3v1h-3zM1810 470h2v1h-2zM1813 470h4v1h-4zM1818 470h4v1h-4zM1825 470h1v1h-1zM1827 470h1v1h-1zM1829 470h5v1h-5zM1802 471h32v1h-32zM1797 472h1v1h-1zM1799 472h2v1h-2zM1802 472h2v1h-2zM1797 473h8v1h-8zM1800 474h2v1h-2zM1804 474h5v1h-5zM1812 474h3v1h-3zM1818 474h1v1h-1zM1800 475h19v1h-19zM1802 476h2v1h-2zM1806 476h5v1h-5zM1814 476h3v1h-3zM1820 476h1v1h-1zM1802 477h19v1h-19zM1797 478h2v1h-2zM1800 478h2v1h-2zM1803 478h1v1h-1zM1797 479h7v1h-7zM1800 480h2v1h-2zM1804 480h6v1h-6zM1811 480h2v1h-2zM1814 480h5v1h-5zM1822 480h1v1h-1zM1800 481h23v1h-23zM1802 482h2v1h-2zM1806 482h6v1h-6zM1813 482h2v1h-2zM1816 482h5v1h-5zM1824 482h1v1h-1zM1802 483h23v1h-23zM1797 484h5v1h-5zM1803 484h4v1h-4zM1797 485h5v1h-5zM1803 485h4v1h-4zM1800 486h2v1h-2zM1804 486h4v1h-4zM1809 486h2v1h-2zM1812 486h1v1h-1zM1814 486h5v1h-5zM1800 487h19v1h-19zM1802 488h2v1h-2zM1806 488h4v1h-4zM1811 488h2v1h-2zM1814 488h1v1h-1zM1816 488h5v1h-5zM1802 489h19v1h-19zM1797 490h1v1h-1zM1799 490h8v1h-8zM1797 491h10v1h-10zM1800 492h2v1h-2zM1804 492h7v1h-7zM1812 492h6v1h-6zM1819 492h9v1h-9zM1800 493h28v1h-28zM1802 494h2v1h-2zM1806 494h7v1h-7zM1814 494h6v1h-6zM1821 494h9v1h-9zM1802 495h28v1h-28zM1797 496h1v1h-1zM1799 496h2v1h-2zM1802 496h2v1h-2zM1797 497h8v1h-8zM1800 498h2v1h-2zM1804 498h8v1h-8zM1813 498h7v1h-7zM1823 498h2v1h-2zM1826 498h3v1h-3zM1830 498h6v1h-6zM1837 498h4v1h-4zM1842 498h4v1h-4zM1847 498h3v1h-3zM1852 498h1v1h-1zM1854 498h2v1h-2zM1857 498h1v1h-1zM1800 499h58v1h-58zM1802 500h2v1h-2zM1806 500h8v1h-8zM1815 500h7v1h-7zM1825 500h2v1h-2zM1828 500h3v1h-3zM1832 500h6v1h-6zM1839 500h4v1h-4zM1844 500h4v1h-4zM1849 500h3v1h-3zM1854 500h1v1h-1zM1856 500h2v1h-2zM1859 500h1v1h-1zM1802 501h58v1h-58zM1797 502h6v1h-6zM1804 502h1v1h-1zM1806 502h2v1h-2zM1812 502h2v1h-2zM1816 502h3v1h-3zM1820 502h3v1h-3zM1824 502h3v1h-3zM1797 503h6v1h-6zM1804 503h1v1h-1zM1806 503h5v1h-5zM1812 503h2v1h-2zM1815 503h4v1h-4zM1820 503h3v1h-3zM1824 503h3v1h-3zM1800 504h2v1h-2zM1804 504h7v1h-7zM1812 504h4v1h-4zM1817 504h5v1h-5zM1800 505h22v1h-22zM1802 506h2v1h-2zM1806 506h7v1h-7zM1814 506h4v1h-4zM1819 506h5v1h-5zM1802 507h22v1h-22zM1797 508h1v1h-1zM1799 508h10v1h-10zM1810 508h4v1h-4zM1797 509h12v1h-12zM1810 509h4v1h-4zM1800 510h2v1h-2zM1804 510h6v1h-6zM1811 510h11v1h-11zM1823 510h3v1h-3zM1827 510h6v1h-6zM1834 510h4v1h-4zM1839 510h1v1h-1zM1841 510h4v1h-4zM1846 510h4v1h-4zM1851 510h3v1h-3zM1800 511h54v1h-54zM1802 512h2v1h-2zM1806 512h6v1h-6zM1813 512h11v1h-11zM1825 512h3v1h-3zM1829 512h6v1h-6zM1836 512h4v1h-4zM1841 512h1v1h-1zM1843 512h4v1h-4zM1848 512h4v1h-4zM1853 512h3v1h-3zM1802 513h54v1h-54zM1797 514h3v1h-3zM1801 514h4v1h-4zM1806 514h1v1h-1zM1797 515h10v1h-10zM1800 516h2v1h-2zM1804 516h5v1h-5zM1812 516h4v1h-4zM1817 516h11v1h-11zM1800 517h31v1h-31zM1802 518h2v1h-2zM1806 518h5v1h-5zM1814 518h4v1h-4zM1819 518h11v1h-11zM1802 519h31v1h-31zM1801 522h4v1h-4zM1806 522h4v1h-4zM1801 523h9v1h-9zM1804 524h2v1h-2zM1808 524h9v1h-9zM1818 524h1v1h-1zM1820 524h6v1h-6zM1827 524h2v1h-2zM1804 525h25v1h-25zM1806 526h2v1h-2zM1810 526h9v1h-9zM1820 526h1v1h-1zM1822 526h6v1h-6zM1829 526h2v1h-2zM1806 527h25v1h-25zM1801 528h2v1h-2zM1804 528h2v1h-2zM1807 528h1v1h-1zM1801 529h7v1h-7zM1804 530h2v1h-2zM1808 530h3v1h-3zM1812 530h3v1h-3zM1816 530h2v1h-2zM1820 530h4v1h-4zM1825 530h5v1h-5zM1833 530h1v1h-1zM1804 531h30v1h-30zM1806 532h2v1h-2zM1810 532h3v1h-3zM1814 532h3v1h-3zM1818 532h2v1h-2zM1822 532h4v1h-4zM1827 532h5v1h-5zM1835 532h1v1h-1zM1806 533h30v1h-30zM1801 534h2v1h-2zM1804 534h2v1h-2zM1807 534h1v1h-1zM1801 535h7v1h-7zM1804 536h2v1h-2zM1808 536h7v1h-7zM1816 536h1v1h-1zM1818 536h11v1h-11zM1831 536h3v1h-3zM1804 537h30v1h-30zM1806 538h2v1h-2zM1810 538h7v1h-7zM1818 538h1v1h-1zM1820 538h11v1h-11zM1833 538h3v1h-3zM1806 539h30v1h-30zM1797 540h2v1h-2zM1800 540h5v1h-5zM1797 541h8v1h-8zM1800 542h2v1h-2zM1804 542h4v1h-4zM1810 542h4v1h-4zM1815 542h5v1h-5zM1821 542h2v1h-2zM1824 542h7v1h-7zM1832 542h2v1h-2zM1800 543h34v1h-34zM1802 544h2v1h-2zM1806 544h4v1h-4zM1812 544h4v1h-4zM1817 544h5v1h-5zM1823 544h2v1h-2zM1826 544h7v1h-7zM1834 544h2v1h-2zM1802 545h34v1h-34zM1797 546h7v1h-7zM1797 547h7v1h-7zM1800 548h2v1h-2zM1804 548h4v1h-4zM1810 548h4v1h-4zM1815 548h4v1h-4zM1822 548h1v1h-1zM1824 548h3v1h-3zM1828 548h6v1h-6zM1835 548h5v1h-5zM1841 548h5v1h-5zM1847 548h2v1h-2zM1800 549h52v1h-52zM1802 550h2v1h-2zM1806 550h4v1h-4zM1812 550h4v1h-4zM1817 550h4v1h-4zM1824 550h1v1h-1zM1826 550h3v1h-3zM1830 550h6v1h-6zM1837 550h5v1h-5zM1843 550h5v1h-5zM1849 550h2v1h-2zM1802 551h52v1h-52zM1797 552h6v1h-6zM1804 552h1v1h-1zM1806 552h2v1h-2zM1812 552h2v1h-2zM1816 552h3v1h-3zM1820 552h3v1h-3zM1824 552h3v1h-3zM1797 553h6v1h-6zM1804 553h1v1h-1zM1806 553h5v1h-5zM1812 553h2v1h-2zM1815 553h4v1h-4zM1820 553h3v1h-3zM1824 553h3v1h-3zM1800 554h2v1h-2zM1804 554h6v1h-6zM1811 554h10v1h-10zM1823 554h4v1h-4zM1828 554h3v1h-3zM1833 554h4v1h-4zM1838 554h3v1h-3zM1842 554h3v1h-3zM1846 554h6v1h-6zM1853 554h4v1h-4zM1858 554h1v1h-1zM1860 554h3v1h-3zM1864 554h8v1h-8zM1800 555h72v1h-72zM1802 556h2v1h-2zM1806 556h6v1h-6zM1813 556h10v1h-10zM1825 556h4v1h-4zM1830 556h3v1h-3zM1835 556h4v1h-4zM1840 556h3v1h-3zM1844 556h3v1h-3zM1848 556h6v1h-6zM1855 556h4v1h-4zM1860 556h1v1h-1zM1862 556h3v1h-3zM1866 556h8v1h-8zM1802 557h72v1h-72zM1797 558h2v1h-2zM1801 558h2v1h-2zM1804 558h1v1h-1zM1806 558h4v1h-4zM1797 559h6v1h-6zM1804 559h6v1h-6zM1800 560h2v1h-2zM1804 560h7v1h-7zM1812 560h1v1h-1zM1814 560h10v1h-10zM1825 560h1v1h-1zM1827 560h2v1h-2zM1830 560h1v1h-1zM1800 561h31v1h-31zM1802 562h2v1h-2zM1806 562h7v1h-7zM1814 562h1v1h-1zM1816 562h10v1h-10zM1827 562h1v1h-1zM1829 562h2v1h-2zM1832 562h1v1h-1zM1802 563h31v1h-31zM1797 564h1v1h-1zM1799 564h10v1h-10zM1810 564h4v1h-4zM1797 565h12v1h-12zM1810 565h4v1h-4zM1800 566h2v1h-2zM1804 566h4v1h-4zM1809 566h3v1h-3zM1800 567h12v1h-12zM1802 568h2v1h-2zM1806 568h4v1h-4zM1811 568h3v1h-3zM1802 569h12v1h-12zM1797 570h2v1h-2zM1800 570h3v1h-3zM1805 570h3v1h-3zM1809 570h2v1h-2zM1813 570h4v1h-4zM1818 570h2v1h-2zM1797 571h6v1h-6zM1804 571h7v1h-7zM1812 571h8v1h-8zM1800 572h2v1h-2zM1804 572h6v1h-6zM1811 572h2v1h-2zM1814 572h5v1h-5zM1820 572h1v1h-1zM1800 573h21v1h-21zM1802 574h2v1h-2zM1806 574h6v1h-6zM1813 574h2v1h-2zM1816 574h5v1h-5zM1822 574h1v1h-1zM1802 575h21v1h-21zM1797 576h1v1h-1zM1799 576h2v1h-2zM1802 576h2v1h-2zM1797 577h8v1h-8zM1800 578h2v1h-2zM1804 578h3v1h-3zM1808 578h2v1h-2zM1811 578h4v1h-4zM1816 578h3v1h-3zM1820 578h2v1h-2zM1800 579h22v1h-22zM1802 580h2v1h-2zM1806 580h3v1h-3zM1810 580h2v1h-2zM1813 580h4v1h-4zM1818 580h3v1h-3zM1822 580h2v1h-2zM1802 581h22v1h-22zM1797 582h2v1h-2zM1800 582h2v1h-2zM1803 582h1v1h-1zM1797 583h7v1h-7zM1800 584h2v1h-2zM1804 584h6v1h-6zM1811 584h11v1h-11zM1825 584h1v1h-1zM1800 585h26v1h-26zM1802 586h2v1h-2zM1806 586h6v1h-6zM1813 586h11v1h-11zM1827 586h1v1h-1zM1802 587h26v1h-26zM1797 588h3v1h-3zM1801 588h4v1h-4zM1797 589h8v1h-8zM1800 590h2v1h-2zM1804 590h5v1h-5zM1810 590h1v1h-1zM1812 590h3v1h-3zM1816 590h2v1h-2zM1820 590h4v1h-4zM1825 590h4v1h-4zM1830 590h3v1h-3zM1834 590h6v1h-6zM1841 590h5v1h-5zM1847 590h4v1h-4zM1852 590h3v1h-3zM1856 590h2v1h-2zM1859 590h2v1h-2zM1800 591h61v1h-61zM1802 592h2v1h-2zM1806 592h5v1h-5zM1812 592h1v1h-1zM1814 592h3v1h-3zM1818 592h2v1h-2zM1822 592h4v1h-4zM1827 592h4v1h-4zM1832 592h3v1h-3zM1836 592h6v1h-6zM1843 592h5v1h-5zM1849 592h4v1h-4zM1854 592h3v1h-3zM1858 592h2v1h-2zM1861 592h2v1h-2zM1802 593h61v1h-61zM1797 594h2v1h-2zM1801 594h2v1h-2zM1804 594h1v1h-1zM1806 594h4v1h-4zM1797 595h6v1h-6zM1804 595h6v1h-6zM1800 596h2v1h-2zM1804 596h13v1h-13zM1818 596h1v1h-1zM1800 597h19v1h-19zM1802 598h2v1h-2zM1806 598h13v1h-13zM1820 598h1v1h-1zM1802 599h19v1h-19zM1797 600h2v1h-2zM1800 600h4v1h-4zM1805 600h1v1h-1zM1807 600h1v1h-1zM1809 600h4v1h-4zM1814 600h6v1h-6zM1797 601h7v1h-7zM1805 601h3v1h-3zM1809 601h11v1h-11zM1800 602h2v1h-2zM1804 602h4v1h-4zM1810 602h7v1h-7zM1818 602h4v1h-4zM1823 602h8v1h-8zM1832 602h4v1h-4zM1837 602h5v1h-5zM1843 602h3v1h-3zM1847 602h6v1h-6zM1854 602h2v1h-2zM1858 602h5v1h-5zM1864 602h5v1h-5zM1800 603h69v1h-69zM1802 604h2v1h-2zM1806 604h4v1h-4zM1812 604h7v1h-7zM1820 604h4v1h-4zM1825 604h8v1h-8zM1834 604h4v1h-4zM1839 604h5v1h-5zM1845 604h3v1h-3zM1849 604h6v1h-6zM1856 604h2v1h-2zM1860 604h5v1h-5zM1866 604h5v1h-5zM1802 605h69v1h-69zM1797 606h2v1h-2zM1801 606h2v1h-2zM1804 606h1v1h-1zM1806 606h4v1h-4zM1797 607h6v1h-6zM1804 607h6v1h-6zM1800 608h2v1h-2zM1804 608h9v1h-9zM1814 608h1v1h-1zM1816 608h5v1h-5zM1800 609h21v1h-21zM1802 610h2v1h-2zM1806 610h9v1h-9zM1816 610h1v1h-1zM1818 610h5v1h-5zM1802 611h21v1h-21zM1797 612h1v1h-1zM1799 612h10v1h-10zM1810 612h4v1h-4zM1797 613h12v1h-12zM1810 613h4v1h-4zM1800 614h2v1h-2zM1804 614h5v1h-5zM1810 614h4v1h-4zM1815 614h2v1h-2zM1818 614h3v1h-3zM1800 615h21v1h-21zM1802 616h2v1h-2zM1806 616h5v1h-5zM1812 616h4v1h-4zM1817 616h2v1h-2zM1820 616h3v1h-3zM1802 617h21v1h-21zM1801 620h2v1h-2zM1801 621h5v1h-5zM1804 622h2v1h-2zM1808 622h4v1h-4zM1813 622h5v1h-5zM1819 622h2v1h-2zM1822 622h3v1h-3zM1804 623h21v1h-21zM1806 624h2v1h-2zM1810 624h4v1h-4zM1815 624h5v1h-5zM1821 624h2v1h-2zM1824 624h3v1h-3zM1806 625h21v1h-21zM1801 626h2v1h-2zM1804 626h5v1h-5zM1801 627h8v1h-8zM1804 628h2v1h-2zM1808 628h6v1h-6zM1815 628h3v1h-3zM1819 628h6v1h-6zM1828 628h1v1h-1zM1804 629h25v1h-25zM1806 630h2v1h-2zM1810 630h6v1h-6zM1817 630h3v1h-3zM1821 630h6v1h-6zM1830 630h1v1h-1zM1806 631h25v1h-25zM1801 632h1v1h-1zM1803 632h10v1h-10zM1814 632h4v1h-4zM1801 633h12v1h-12zM1814 633h4v1h-4zM1804 634h2v1h-2zM1808 634h7v1h-7zM1816 634h4v1h-4zM1821 634h9v1h-9zM1831 634h5v1h-5zM1804 635h32v1h-32zM1806 636h2v1h-2zM1810 636h7v1h-7zM1818 636h4v1h-4zM1823 636h9v1h-9zM1833 636h5v1h-5zM1806 637h32v1h-32zM1801 638h6v1h-6zM1808 638h1v1h-1zM1810 638h2v1h-2zM1816 638h2v1h-2zM1820 638h3v1h-3zM1824 638h3v1h-3zM1828 638h3v1h-3zM1801 639h6v1h-6zM1808 639h1v1h-1zM1810 639h5v1h-5zM1816 639h2v1h-2zM1819 639h4v1h-4zM1824 639h3v1h-3zM1828 639h3v1h-3zM1804 640h2v1h-2zM1808 640h5v1h-5zM1814 640h5v1h-5zM1820 640h4v1h-4zM1825 640h5v1h-5zM1831 640h3v1h-3zM1835 640h6v1h-6zM1843 640h2v1h-2zM1846 640h4v1h-4zM1851 640h1v1h-1zM1853 640h4v1h-4zM1858 640h4v1h-4zM1863 640h3v1h-3zM1804 641h62v1h-62zM1806 642h2v1h-2zM1810 642h5v1h-5zM1816 642h5v1h-5zM1822 642h4v1h-4zM1827 642h5v1h-5zM1833 642h3v1h-3zM1837 642h6v1h-6zM1845 642h2v1h-2zM1848 642h4v1h-4zM1853 642h1v1h-1zM1855 642h4v1h-4zM1860 642h4v1h-4zM1865 642h3v1h-3zM1806 643h62v1h-62zM1801 644h1v1h-1zM1803 644h7v1h-7zM1801 645h9v1h-9zM1804 646h2v1h-2zM1808 646h3v1h-3zM1812 646h2v1h-2zM1815 646h4v1h-4zM1820 646h6v1h-6zM1827 646h4v1h-4zM1832 646h4v1h-4zM1804 647h32v1h-32zM1806 648h2v1h-2zM1810 648h3v1h-3zM1814 648h2v1h-2zM1817 648h4v1h-4zM1822 648h6v1h-6zM1829 648h4v1h-4zM1834 648h4v1h-4zM1806 649h32v1h-32zM1801 650h1v1h-1zM1803 650h2v1h-2zM1806 650h2v1h-2zM1801 651h8v1h-8zM1804 652h2v1h-2zM1808 652h5v1h-5zM1814 652h3v1h-3zM1818 652h5v1h-5zM1824 652h2v1h-2zM1804 653h22v1h-22zM1806 654h2v1h-2zM1810 654h5v1h-5zM1816 654h3v1h-3zM1820 654h5v1h-5zM1826 654h2v1h-2zM1806 655h22v1h-22zM1801 656h1v1h-1zM1803 656h8v1h-8zM1801 657h10v1h-10zM1804 658h2v1h-2zM1808 658h3v1h-3zM1812 658h1v1h-1zM1814 658h8v1h-8zM1824 658h1v1h-1zM1826 658h3v1h-3zM1830 658h3v1h-3zM1834 658h6v1h-6zM1841 658h4v1h-4zM1846 658h1v1h-1zM1848 658h4v1h-4zM1853 658h1v1h-1zM1804 659h50v1h-50zM1806 660h2v1h-2zM1810 660h3v1h-3zM1814 660h1v1h-1zM1816 660h8v1h-8zM1826 660h1v1h-1zM1828 660h3v1h-3zM1832 660h3v1h-3zM1836 660h6v1h-6zM1843 660h4v1h-4zM1848 660h1v1h-1zM1850 660h4v1h-4zM1855 660h1v1h-1zM1806 661h50v1h-50zM1797 662h2v1h-2zM1800 662h4v1h-4zM1797 663h7v1h-7zM1800 664h2v1h-2zM1804 664h5v1h-5zM1812 664h9v1h-9zM1800 665h21v1h-21zM1802 666h2v1h-2zM1806 666h5v1h-5zM1814 666h9v1h-9zM1802 667h21v1h-21zM1801 670h2v1h-2zM1801 671h5v1h-5zM1804 672h2v1h-2zM1808 672h3v1h-3zM1812 672h3v1h-3zM1816 672h2v1h-2zM1820 672h4v1h-4zM1825 672h5v1h-5zM1833 672h1v1h-1zM1804 673h30v1h-30zM1806 674h2v1h-2zM1810 674h3v1h-3zM1814 674h3v1h-3zM1818 674h2v1h-2zM1822 674h4v1h-4zM1827 674h5v1h-5zM1835 674h1v1h-1zM1806 675h30v1h-30zM1805 678h2v1h-2zM1811 678h7v1h-7zM1819 678h6v1h-6zM1826 678h1v1h-1zM1828 678h2v1h-2zM1805 679h5v1h-5zM1811 679h7v1h-7zM1819 679h11v1h-11zM1808 680h2v1h-2zM1812 680h3v1h-3zM1816 680h3v1h-3zM1820 680h2v1h-2zM1824 680h4v1h-4zM1829 680h5v1h-5zM1837 680h9v1h-9zM1808 681h38v1h-38zM1810 682h2v1h-2zM1814 682h3v1h-3zM1818 682h3v1h-3zM1822 682h2v1h-2zM1826 682h4v1h-4zM1831 682h5v1h-5zM1839 682h9v1h-9zM1810 683h38v1h-38zM1801 684h6v1h-6zM1801 685h6v1h-6zM1804 686h2v1h-2zM1808 686h3v1h-3zM1812 686h3v1h-3zM1816 686h2v1h-2zM1820 686h4v1h-4zM1825 686h3v1h-3zM1829 686h1v1h-1zM1831 686h2v1h-2zM1834 686h2v1h-2zM1804 687h32v1h-32zM1806 688h2v1h-2zM1810 688h3v1h-3zM1814 688h3v1h-3zM1818 688h2v1h-2zM1822 688h4v1h-4zM1827 688h3v1h-3zM1831 688h1v1h-1zM1833 688h2v1h-2zM1836 688h2v1h-2zM1806 689h32v1h-32zM1805 692h2v1h-2zM1808 692h2v1h-2zM1811 692h1v1h-1zM1813 692h7v1h-7zM1821 692h6v1h-6zM1828 692h1v1h-1zM1830 692h2v1h-2zM1805 693h7v1h-7zM1813 693h7v1h-7zM1821 693h11v1h-11zM1808 694h2v1h-2zM1812 694h3v1h-3zM1816 694h3v1h-3zM1820 694h2v1h-2zM1824 694h4v1h-4zM1829 694h3v1h-3zM1833 694h1v1h-1zM1835 694h2v1h-2zM1838 694h10v1h-10zM1808 695h40v1h-40zM1810 696h2v1h-2zM1814 696h3v1h-3zM1818 696h3v1h-3zM1822 696h2v1h-2zM1826 696h4v1h-4zM1831 696h3v1h-3zM1835 696h1v1h-1zM1837 696h2v1h-2zM1840 696h10v1h-10zM1810 697h40v1h-40zM1797 698h4v1h-4zM1802 698h2v1h-2zM1805 698h3v1h-3zM1809 698h3v1h-3zM1797 699h7v1h-7zM1805 699h7v1h-7zM1796 700h4v1h-4zM1796 701h4v1h-4zM1797 702h4v1h-4zM1797 703h4v1h-4zM1800 704h2v1h-2zM1804 704h3v1h-3zM1808 704h1v1h-1zM1811 704h4v1h-4zM1816 704h3v1h-3zM1800 705h19v1h-19zM1802 706h2v1h-2zM1806 706h3v1h-3zM1810 706h1v1h-1zM1813 706h4v1h-4zM1818 706h3v1h-3zM1802 707h19v1h-19zM1810 668h2v1h-2zM1814 668h3v1h-3zM1818 668h3v1h-3zM1822 668h2v1h-2zM1826 668h4v1h-4zM1831 668h5v1h-5zM1839 668h9v1h-9zM1810 669h38v1h-38z" fill="#ce9178" fill-opacity="0.42"/><path d="M1789 35h1v1h-1zM1789 41h1v1h-1zM1789 47h1v1h-1zM1789 53h1v1h-1zM1789 59h1v1h-1zM1789 65h1v1h-1zM1789 71h1v1h-1zM1789 77h1v1h-1zM1789 83h1v1h-1zM1789 89h1v1h-1zM1793 97h1v1h-1zM1793 103h1v1h-1zM1793 109h1v1h-1zM1793 115h1v1h-1zM1793 121h1v1h-1zM1793 127h1v1h-1zM1793 133h1v1h-1zM1789 139h1v1h-1zM1789 145h1v1h-1zM1789 151h1v1h-1zM1789 157h1v1h-1zM1789 163h1v1h-1zM1793 171h1v1h-1zM1793 177h1v1h-1zM1793 183h1v1h-1zM1789 189h1v1h-1zM1789 195h1v1h-1zM1789 201h1v1h-1zM1789 207h1v1h-1zM1789 213h1v1h-1zM1789 219h1v1h-1zM1789 225h1v1h-1zM1789 231h1v1h-1zM1789 237h1v1h-1zM1789 243h1v1h-1zM1789 249h1v1h-1zM1789 255h1v1h-1zM1789 261h1v1h-1zM1793 269h1v1h-1zM1793 275h1v1h-1zM1793 281h1v1h-1zM1793 287h1v1h-1zM1793 293h1v1h-1zM1789 299h1v1h-1zM1793 307h1v1h-1zM1793 313h1v1h-1zM1793 319h1v1h-1zM1793 325h1v1h-1zM1793 331h1v1h-1zM1793 337h1v1h-1zM1789 343h1v1h-1zM1793 351h1v1h-1zM1793 357h1v1h-1zM1789 363h1v1h-1zM1789 369h1v1h-1zM1789 375h1v1h-1zM1789 381h1v1h-1zM1789 387h1v1h-1zM1789 393h1v1h-1zM1793 401h1v1h-1zM1793 407h1v1h-1zM1789 413h1v1h-1zM1789 419h1v1h-1zM1789 425h1v1h-1zM1789 431h1v1h-1zM1789 437h1v1h-1zM1789 443h1v1h-1zM1789 449h1v1h-1zM1789 455h1v1h-1zM1789 461h1v1h-1zM1789 467h1v1h-1zM1789 473h1v1h-1zM1789 479h1v1h-1zM1789 485h1v1h-1zM1789 491h1v1h-1zM1789 497h1v1h-1zM1789 503h1v1h-1zM1789 509h1v1h-1zM1789 515h1v1h-1zM1793 523h1v1h-1zM1793 529h1v1h-1zM1793 535h1v1h-1zM1789 541h1v1h-1zM1789 547h1v1h-1zM1789 553h1v1h-1zM1789 559h1v1h-1zM1789 565h1v1h-1zM1789 571h1v1h-1zM1789 577h1v1h-1zM1789 583h1v1h-1zM1789 589h1v1h-1zM1789 595h1v1h-1zM1789 601h1v1h-1zM1789 607h1v1h-1zM1789 613h1v1h-1zM1793 621h1v1h-1zM1793 627h1v1h-1zM1793 633h1v1h-1zM1793 639h1v1h-1zM1793 645h1v1h-1zM1793 651h1v1h-1zM1793 657h1v1h-1zM1789 663h1v1h-1zM1793 671h1v1h-1zM1797 679h1v1h-1zM1793 685h1v1h-1zM1797 693h1v1h-1zM1789 699h1v1h-1zM1789 703h1v1h-1z" fill="#d4d4d4" fill-opacity="0.3"/></g></svg><div class="a" style="left:1907px;top:35px;width:1px;height:705px;background:#3a3a3a"></div><div class="a" style="left:1908px;top:39px;width:4px;height:6px;background:#1b5fb3"></div><div class="a" style="left:1908px;top:702px;width:4px;height:5px;background:#1b5fb3"></div><div class="a" style="left:1908px;top:707px;width:8px;height:2px;background:#a0a0a0"></div><div class="a" style="left:221px;top:740px;width:1695px;height:1px;background:#414141"></div><div class="cap" style="left:241px;top:748px;color:#e7e7e7;font-size:10.6px;letter-spacing:-0.48px">PROBLEMS</div><div class="a" style="left:241px;top:772px;width:54px;height:1px;background:#8a8a8a"></div><div class="cap" style="left:315px;top:748px;color:#969696;font-size:10.6px;letter-spacing:-0.48px">OUTPUT</div><div class="cap" style="left:376px;top:748px;color:#969696;font-size:10.6px;letter-spacing:-0.48px">DEBUG CONSOLE</div><div class="cap" style="left:481px;top:748px;color:#969696;font-size:10.6px;letter-spacing:-0.48px">TERMINAL</div><div class="t" style="left:241px;top:775px;font-size:13px">No problems have been detected in the workspace so far.</div><div class="a" style="left:1283px;top:747px;width:500px;height:24px;background:#3c3c3c"></div><div class="t" style="left:1288px;top:749px;color:#a6a6a6;font-size:12.2px">Filter. Eg: text, **/*.ts, !**/node_modules/**</div><svg class="ic" style="left:0;top:0" width="1916" height="1124" viewBox="0 0 1916 1124"><polygon points="1771.25,756.25 1773.08,756.81 1773.08,759.19 1771.25,759.75 1771.25,759.77 1772.15,761.46 1770.46,763.15 1768.77,762.25 1768.75,762.25 1768.19,764.08 1765.81,764.08 1765.25,762.25 1765.23,762.25 1763.54,763.15 1761.85,761.46 1762.75,759.77 1762.75,759.75 1760.92,759.19 1760.92,756.81 1762.75,756.25 1762.75,756.23 1761.85,754.54 1763.54,752.85 1765.23,753.75 1765.25,753.75 1765.81,751.92 1768.19,751.92 1768.75,753.75 1768.77,753.75 1770.46,752.85 1772.15,754.54 1771.25,756.23" fill="#c5c5c5"/><circle cx="1767" cy="758" r="4.6" fill="#c5c5c5"/><circle cx="1767" cy="758" r="1.8" fill="#3c3c3c"/></svg><svg class="ic" style="left:0;top:0" width="1916" height="1124"><circle cx="1772.5" cy="763" r="4.6" fill="#3c3c3c"/><circle cx="1772.5" cy="763" r="3.4" fill="#c5c5c5"/><rect x="1770.3" y="762.4" width="4.4" height="1.3" fill="#3c3c3c"/></svg><svg class="ic" style="left:1798px;top:750px" width="18" height="18" viewBox="1798 750 18 18"><path d="M1805 752.6 L1813.6 752.6 L1813.6 761.2 M1803.2 754.4 L1811.8 754.4 L1811.8 763" fill="none" stroke="#8a8a8a" stroke-width="1"/><rect x="1801.6" y="756.2" width="8.4" height="8.4" fill="#3a3a3a" stroke="#8a8a8a" stroke-width="1.2"/><rect x="1803.8" y="759.8" width="4" height="1.2" fill="#75beff"/></svg><svg class="ic" style="left:1831.0px;top:753.0px" width="16" height="10" viewBox="0 0 16 10"><path d="M1 9 L8 2 L15 9" fill="none" stroke="#c5c5c5" stroke-width="1.8"/></svg><svg class="ic" style="left:1863.0px;top:752.5px" width="14" height="13" viewBox="0 0 14 13"><rect x="0.8" y="0.8" width="12.4" height="11.4" fill="none" stroke="#c5c5c5" stroke-width="1.6"/><rect x="8" y="0.8" width="5.2" height="11.4" fill="#c5c5c5"/></svg><svg class="ic" style="left:1897.0px;top:753.5px" width="11" height="11" viewBox="0 0 11 11"><path d="M1 1 L10 10 M10 1 L1 10" stroke="#c5c5c5" stroke-width="2.5"/></svg><div class="a" style="left:0;top:1104px;width:1916px;height:20px;background:#007acc"></div><svg class="ic" style="left:15.0px;top:1108.5px" width="10" height="14" viewBox="0 0 10 14"><circle cx="2.5" cy="2.5" r="1.6" fill="none" stroke="#fff" stroke-width="1.1"/><circle cx="2.5" cy="11.5" r="1.6" fill="none" stroke="#fff" stroke-width="1.1"/><circle cx="7.5" cy="4" r="1.6" fill="none" stroke="#fff" stroke-width="1.1"/><path d="M2.5 4 L2.5 10 M7.5 5.5 Q7.5 8 2.5 9.5" fill="none" stroke="#fff" stroke-width="1.2"/></svg><div style="position:absolute;white-space:nowrap;font-size:11.6px;line-height:20px;color:#ffffff;top:1105px;left:28px;font-size:12px">extension-test*</div><svg class="ic" style="left:122.0px;top:1110.0px" width="16" height="12" viewBox="0 0 16 12"><path d="M4 10 Q0.8 10 0.8 7 Q0.8 4.5 3.5 4.3 Q4.5 1 8 1 Q11.5 1 12.3 4.3 Q15.2 4.5 15.2 7.2 Q15.2 10 12 10" fill="none" stroke="#fff" stroke-width="1.3"/><path d="M8 11.5 L8 5.5 M5.5 8 L8 5.5 L10.5 8" fill="none" stroke="#fff" stroke-width="1.3"/></svg><svg class="ic" style="left:150.0px;top:1110.0px" width="11" height="11" viewBox="0 0 11 11"><circle cx="5.5" cy="5.5" r="5" fill="#fff"/><path d="M3.3 3.3 L7.7 7.7 M7.7 3.3 L3.3 7.7" stroke="#007acc" stroke-width="1.5"/></svg><div style="position:absolute;white-space:nowrap;font-size:11.6px;line-height:20px;color:#ffffff;top:1105px;left:164px">0</div><svg class="ic" style="left:176.5px;top:1110.0px" width="11" height="11" viewBox="0 0 11 11"><path d="M5.5 0.5 L10.8 10.5 L0.2 10.5 Z" fill="#fff"/><rect x="4.8" y="3.5" width="1.4" height="4" fill="#007acc"/><rect x="4.8" y="8.3" width="1.4" height="1.3" fill="#007acc"/></svg><div style="position:absolute;white-space:nowrap;font-size:11.6px;line-height:20px;color:#ffffff;top:1105px;left:190px">0</div><div style="position:absolute;white-space:nowrap;font-size:11.6px;line-height:20px;color:#ffffff;top:1105px;left:1577px">Ln 583, Col 35</div><div style="position:absolute;white-space:nowrap;font-size:11.6px;line-height:20px;color:#ffffff;top:1105px;left:1666px">Spaces: 2</div><div style="position:absolute;white-space:nowrap;font-size:11.6px;line-height:20px;color:#ffffff;top:1105px;left:1730px">UTF-8</div><div style="position:absolute;white-space:nowrap;font-size:11.6px;line-height:20px;color:#ffffff;top:1105px;left:1776px">CRLF</div><div style="position:absolute;white-space:nowrap;font-size:11.6px;line-height:20px;color:#ffffff;top:1105px;left:1818px">YAML</div><svg class="ic" style="left:1864.0px;top:1108.0px" width="14" height="14" viewBox="0 0 14 14"><circle cx="7" cy="7" r="6.5" fill="#fff"/><circle cx="4.8" cy="5.2" r="1.1" fill="#007acc"/><circle cx="9.2" cy="5.2" r="1.1" fill="#007acc"/><path d="M3.5 8.3 Q7 11.5 10.5 8.3" fill="none" stroke="#007acc" stroke-width="1.3"/></svg><svg class="ic" style="left:1893.0px;top:1109.5px" width="14" height="13" viewBox="0 0 14 13"><path d="M7 0.5 Q11.2 0.5 11.2 5 L11.2 8 L13.5 10.5 L0.5 10.5 L2.8 8 L2.8 5 Q2.8 0.5 7 0.5 Z" fill="#fff"/><circle cx="7" cy="11.5" r="1.6" fill="#fff"/></svg></body></html>
